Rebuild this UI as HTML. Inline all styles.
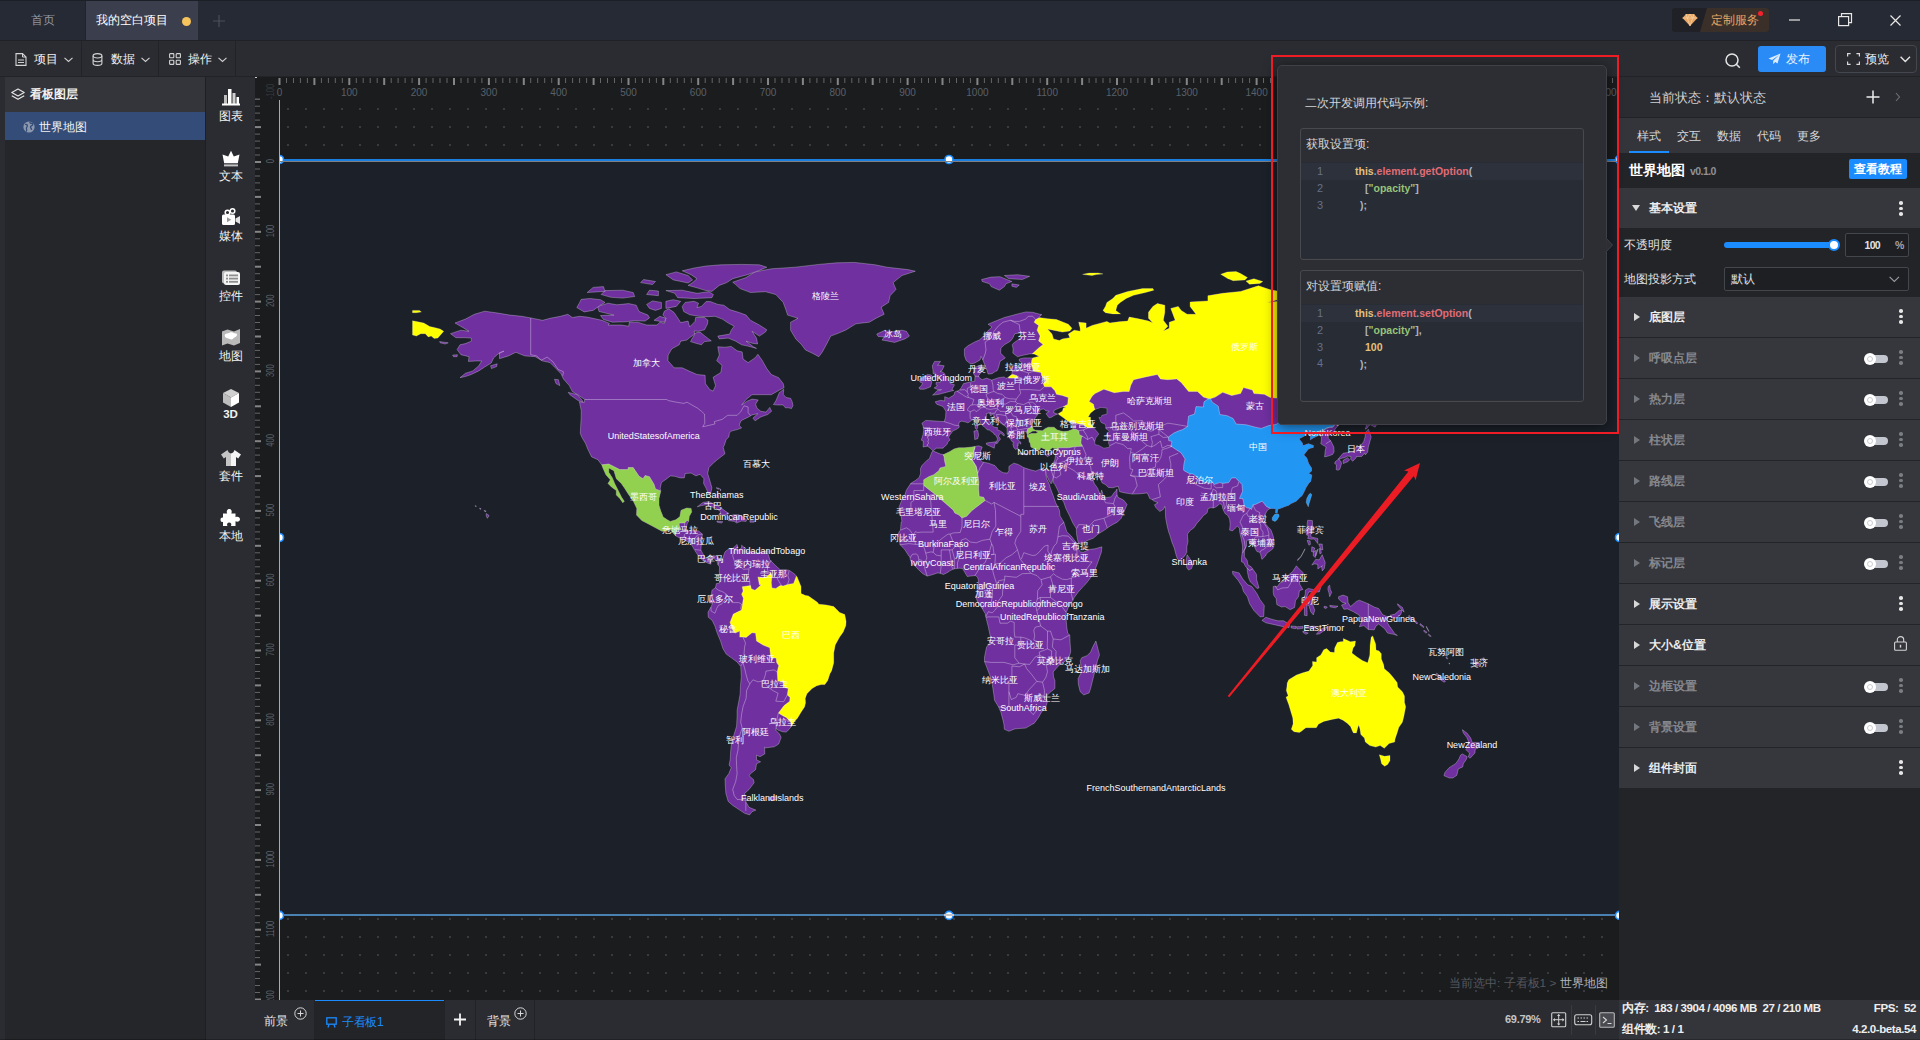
<!DOCTYPE html>
<html lang="zh">
<head>
<meta charset="utf-8">
<title>editor</title>
<style>
*{box-sizing:border-box;margin:0;padding:0}
html,body{width:1920px;height:1040px;overflow:hidden;background:#232428;font-family:"Liberation Sans",sans-serif;font-size:12px;color:#e6e6e6}
.a{position:absolute}
.t{position:absolute;white-space:nowrap;line-height:1}
svg{position:absolute;overflow:visible}
.b{font-weight:bold}
/* top bar */
#top{left:0;top:0;width:1920px;height:40px;background:#262a34}
#top2{left:0;top:41px;width:1920px;height:36px;background:#2b2c31}
.vd{position:absolute;top:41px;width:1px;height:36px;background:#222327}
/* left */
#lp{left:5px;top:77px;width:201px;height:963px;background:#252629}
#lph{left:5px;top:77px;width:201px;height:35px;background:#34353b}
#lps{left:5px;top:112px;width:201px;height:28px;background:#344d78}
#tb{left:206px;top:77px;width:49px;height:963px;background:#2b2c31}
.tbl{position:absolute;left:206px;width:49px;text-align:center;font-size:12px;color:#f2f2f2;line-height:1}
/* canvas */
#cv{left:255px;top:77px;width:1365px;height:923px;background:#1b1c1e}
#comp{left:280px;top:160px;width:1340px;height:755px;background:#1b2029}
/* right */
#rp{left:1619px;top:77px;width:301px;height:923px;background:#232427}
.sec{position:absolute;left:1619px;width:301px;height:40px;background:#36373d}
.sect{position:absolute;left:1649px;font-size:12px;font-weight:bold;line-height:1;white-space:nowrap}
.tri{position:absolute;left:1634px;width:0;height:0;border-left:6px solid #d8d8d8;border-top:4.5px solid transparent;border-bottom:4.5px solid transparent}
.dis .tri{border-left-color:#74777d}
.dis .sect{color:#85888e}
.dots3{position:absolute;left:1899px;width:4px}
.dots3 i{position:absolute;left:0;width:3.6px;height:3.6px;border-radius:50%;background:#e6e6e6}
.dis .dots3 i{background:#7a7d83}
.tg{position:absolute;left:1864px;width:24px;height:12px}
.tg .tr{position:absolute;left:5px;top:2px;width:19px;height:8px;border-radius:4px;background:#c3c6ce}
.tg .kn{position:absolute;left:0;top:0;width:12px;height:12px;border-radius:50%;background:#fff}
.tg .kn:after{content:"";position:absolute;left:3px;top:3px;width:4px;height:4px;border-radius:50%;border:1px solid #c9ccd3}
/* bottom */
#bb{left:255px;top:1000px;width:1364px;height:40px;background:#2b2c31}
#sb{left:1619px;top:1000px;width:301px;height:40px;background:#34353b}
/* popup */
#pop{left:1277px;top:65px;width:330px;height:360px;background:#2d2e33;border:1px solid #404148;border-radius:5px;box-shadow:0 2px 14px rgba(0,0,0,.55)}
.cb{position:absolute;left:1300px;width:284px;height:132px;border:1px solid #47494f;border-radius:3px;background:#2d2e33}
.code{position:absolute;left:1301px;width:282px;height:96px;background:#282c34}
.hl{position:absolute;left:1301px;width:282px;height:17px;background:#2c313c}
.ln{position:absolute;font-size:11px;color:#66708a;line-height:1}
.cd{position:absolute;font-size:10.5px;line-height:1;white-space:nowrap;color:#abb2bf;font-weight:bold}
.cy{color:#e5c07b}.cr{color:#e06c75}.cc{color:#56b6c2}.cg{color:#98c379}.co{color:#e5c07b}
</style>
</head>
<body>
<!-- ============ TOP BAR ============ -->
<div class="a" id="top"></div>
<div class="a" style="left:0;top:0;width:1920px;height:1px;background:#1d1f26"></div>
<div class="a" style="left:0;top:40px;width:1920px;height:1px;background:#1f2127"></div>
<div class="a" style="left:85px;top:1px;width:1px;height:39px;background:#20232b"></div>
<div class="a" style="left:86px;top:1px;width:112px;height:39px;background:#3a3e4d"></div>
<div class="t" style="left:31px;top:14px;font-size:12px;color:#9096a3">首页</div>
<div class="t" style="left:96px;top:14px;font-size:12px;color:#ffffff">我的空白项目</div>
<div class="a" style="left:182px;top:16.5px;width:9px;height:9px;border-radius:50%;background:#f7c35c"></div>
<svg style="left:213px;top:15px" width="12" height="12"><path d="M6 0v12M0 6h12" stroke="#4b4f5a" stroke-width="1.2" fill="none"/></svg>
<!-- custom service -->
<div class="a" style="left:1672px;top:8px;width:97px;height:24px;border-radius:3px;background:#1f2127"></div>
<svg style="left:1700px;top:8px" width="69" height="24"><path d="M7 0H66a3 3 0 0 1 3 3V21a3 3 0 0 1-3 3H0Z" fill="#3b3029"/></svg>
<svg style="left:1682px;top:13px" width="16" height="14"><path d="M4 1h8l3.5 4L8 13 .5 5Z" fill="#e9a868"/><path d="M.5 5h15M4 1l4 12 4-12M5.5 5 8 1l2.500 4" stroke="#f6d2a4" stroke-width=".7" fill="none"/></svg>
<div class="t" style="left:1711px;top:14px;font-size:12px;color:#e7a767">定制服务</div>
<div class="a" style="left:1758px;top:11px;width:5px;height:5px;border-radius:50%;background:#f5222d"></div>
<svg style="left:1789px;top:19px" width="12" height="2"><path d="M0 1h11" stroke="#e8e8e8" stroke-width="1.2"/></svg>
<svg style="left:1838px;top:13px" width="15" height="14"><rect x=".6" y="3.6" width="10" height="9" fill="none" stroke="#e8e8e8" stroke-width="1.2"/><path d="M3.500 3.500V.6h10v9h-3" fill="none" stroke="#e8e8e8" stroke-width="1.2"/></svg>
<svg style="left:1890px;top:15px" width="11" height="11"><path d="M.5.5l10 10M10.500.5l-10 10" stroke="#e8e8e8" stroke-width="1.2"/></svg>

<!-- ============ SECOND BAR ============ -->
<div class="a" id="top2"></div>
<div class="a" style="left:0;top:76px;width:1920px;height:1px;background:#222327"></div>
<div class="vd" style="left:81px"></div><div class="vd" style="left:158px"></div><div class="vd" style="left:235px"></div>
<svg style="left:15px;top:53px" width="12" height="13"><path d="M1 .6h6.500L11 4v8.400H1Z" fill="none" stroke="#d4d4d4" stroke-width="1.1"/><path d="M7.500.6V4H11M3 7h6M3 9.500h6" fill="none" stroke="#d4d4d4" stroke-width="1"/></svg>
<div class="t" style="left:34px;top:53px;font-size:12px;color:#f0f0f0">项目</div>
<svg style="left:64px;top:57px" width="9" height="6"><path d="M.5.8l4 3.700 4-3.700" fill="none" stroke="#d0d0d0" stroke-width="1.1"/></svg>
<svg style="left:92px;top:53px" width="11" height="13"><ellipse cx="5.500" cy="2.800" rx="4.400" ry="2.200" fill="none" stroke="#d4d4d4" stroke-width="1.1"/><path d="M1.100 2.800v7.400c0 1.200 2 2.200 4.400 2.200s4.400-1 4.400-2.200V2.800M1.100 6.500c0 1.200 2 2.200 4.400 2.200s4.400-1 4.400-2.200" fill="none" stroke="#d4d4d4" stroke-width="1.1"/></svg>
<div class="t" style="left:111px;top:53px;font-size:12px;color:#f0f0f0">数据</div>
<svg style="left:141px;top:57px" width="9" height="6"><path d="M.5.8l4 3.700 4-3.700" fill="none" stroke="#d0d0d0" stroke-width="1.1"/></svg>
<svg style="left:169px;top:53px" width="12" height="12"><g fill="none" stroke="#d4d4d4" stroke-width="1.1"><rect x=".6" y=".6" width="4.200" height="4.200" rx=".7"/><rect x="7.200" y=".6" width="4.200" height="4.200" rx=".7"/><rect x=".6" y="7.200" width="4.200" height="4.200" rx=".7"/><rect x="7.200" y="7.200" width="4.200" height="4.200" rx=".7"/></g></svg>
<div class="t" style="left:188px;top:53px;font-size:12px;color:#f0f0f0">操作</div>
<svg style="left:218px;top:57px" width="9" height="6"><path d="M.5.8l4 3.700 4-3.700" fill="none" stroke="#d0d0d0" stroke-width="1.1"/></svg>
<!-- search / publish / preview -->
<svg style="left:1724px;top:52px" width="18" height="18"><circle cx="8" cy="8" r="6" fill="none" stroke="#e4e4e4" stroke-width="1.500"/><path d="M12.300 12.300l3.500 3.500" stroke="#e4e4e4" stroke-width="1.600"/></svg>
<div class="a" style="left:1758px;top:46px;width:68px;height:26px;border-radius:3px;background:#2a8bf7"></div>
<svg style="left:1768px;top:53px" width="13" height="12"><path d="M12.500.5.5 5.500l3.500 1.600L11 2 5.200 7.800v3.500l2-2.300 2.300 1.500Z" fill="#dcebff"/></svg>
<div class="t" style="left:1786px;top:53px;font-size:12px;color:#e8f2ff">发布</div>
<div class="a" style="left:1835px;top:45px;width:82px;height:28px;border-radius:4px;border:1px solid #45474e"></div>
<svg style="left:1847px;top:53px" width="13" height="12"><path d="M.6 3.500V.6h3M9.400.6h3v2.900M12.400 8.500v2.900h-3M3.600 11.400h-3V8.500" fill="none" stroke="#d8d8d8" stroke-width="1.200"/></svg>
<div class="t" style="left:1865px;top:53px;font-size:12px;color:#f0f0f0">预览</div>
<svg style="left:1900px;top:56px" width="11" height="7"><path d="M.6.8l4.700 4.600L10 .8" fill="none" stroke="#e4e4e4" stroke-width="1.400"/></svg>

<!-- ============ LEFT PANEL ============ -->
<div class="a" style="left:0;top:77px;width:5px;height:963px;background:#2b2c31"></div>
<div class="a" id="lp"></div>
<div class="a" id="lph"></div>
<div class="a" id="lps"></div>
<svg style="left:11px;top:88px" width="14" height="14"><path d="M7 1 .8 4.500 7 8l6.200-3.500Z" fill="none" stroke="#e4e4e4" stroke-width="1.200" stroke-linejoin="round"/><path d="M.8 7.800 7 11.300l6.200-3.500" fill="none" stroke="#e4e4e4" stroke-width="1.200" stroke-linejoin="round"/></svg>
<div class="t b" style="left:30px;top:88px;font-size:12px;color:#f2f2f2">看板图层</div>
<svg style="left:23px;top:121px" width="12" height="12"><circle cx="6" cy="6" r="5.600" fill="#8c98ae"/><path d="M2 3.500c1.500-.5 2.500.3 2.300 1.500S3 6.500 3.500 8s-.5 2 .3 2.600M7 .8c-.5 1 .5 1.700 1.500 1.500s1.800.7 1 1.700-2 .8-2 2 1.300 1.500 1 2.800" fill="none" stroke="#344d78" stroke-width="1.300"/></svg>
<div class="t" style="left:39px;top:121px;font-size:12px;color:#f2f2f2">世界地图</div>

<!-- ============ COMPONENT TOOLBAR ============ -->
<div class="a" id="tb"></div>
<div class="a" style="left:205px;top:77px;width:1px;height:963px;background:#1e1f22"></div>
<!-- chart -->
<svg style="left:221px;top:88px" width="20" height="18"><rect x="3" y="7" width="3" height="9" fill="#bdbdbd"/><rect x="7" y="1" width="3.500" height="15" fill="#ffffff"/><rect x="11.500" y="5" width="3" height="11" fill="#cfcfcf"/><rect x="15.500" y="9" width="2.500" height="7" fill="#ffffff"/><rect x="1" y="15.500" width="18" height="2" fill="#ffffff"/></svg>
<div class="tbl" style="top:110px">图表</div>
<!-- text (crown) -->
<svg style="left:221px;top:150px" width="20" height="17"><path d="M10 .8 12.800 6.500 18.500 4.500 16.800 13.200H3.200L1.500 4.500 7.200 6.500Z" fill="#ffffff"/><rect x="3" y="14.400" width="14" height="2" fill="#c4c4c4"/></svg>
<div class="tbl" style="top:170px">文本</div>
<!-- media (camera) -->
<svg style="left:221px;top:208px" width="20" height="18"><circle cx="6.500" cy="4.500" r="2.300" fill="none" stroke="#fff" stroke-width="1.500"/><circle cx="11.500" cy="3" r="2.300" fill="none" stroke="#fff" stroke-width="1.500"/><rect x="1" y="6.500" width="13" height="10.500" rx="1.500" fill="#ffffff"/><path d="M14.500 10.500 19 8v8l-4.500-2.500Z" fill="#e2e2e2"/><path d="M6 9.300v5l4.300-2.500Z" fill="#9a9a9a"/></svg>
<div class="tbl" style="top:230px">媒体</div>
<!-- control (list) -->
<svg style="left:221px;top:269px" width="20" height="17"><rect x="1" y="1.500" width="15" height="13" rx="2" fill="#bdbdbd"/><rect x="3" y="3" width="16" height="13" rx="2" fill="#f4f4f4"/><g fill="#8e8e8e"><rect x="5" y="5.500" width="2" height="1.800"/><rect x="8" y="5.500" width="9" height="1.800"/><rect x="5" y="8.700" width="2" height="1.800"/><rect x="8" y="8.700" width="9" height="1.800"/><rect x="5" y="11.900" width="2" height="1.800"/><rect x="8" y="11.900" width="9" height="1.800"/></g></svg>
<div class="tbl" style="top:290px">控件</div>
<!-- map -->
<svg style="left:221px;top:328px" width="20" height="18"><path d="M1 3.500 6.500 1.500 13 3.500 19 1v14l-6 2.500-6.500-2L1 17.500Z" fill="#b9b9b9"/><path d="M4 6.500c1-1.500 3-1 4.500-1.800s3-.5 4.500.3 3 .2 3 1.500-1 2.500-2.500 3-1.500 2-3 2-2.500-1-4-1.200S3 8 4 6.500Z" fill="#ffffff"/></svg>
<div class="tbl" style="top:350px">地图</div>
<!-- 3D cube -->
<svg style="left:221px;top:388px" width="20" height="20"><path d="M10 1 18 5 10 9.500 2 5Z" fill="#cfcfcf"/><path d="M2 5v9.500l8 4.500V9.500Z" fill="#bdbdbd"/><path d="M18 5v9.500L10 19V9.500Z" fill="#ffffff"/></svg>
<div class="tbl b" style="top:409px;font-size:11.5px">3D</div>
<!-- suite (shirt) -->
<svg style="left:220px;top:449px" width="22" height="18"><path d="M7.500 1 1 5.500l2.800 4L6 8v9h5V4.500C9.500 4.200 8 3 7.500 1Z" fill="#c4c4c4"/><path d="M14.500 1 21 5.500l-2.800 4L16 8v9h-5V4.500C12.500 4.200 14 3 14.500 1Z" fill="#f4f4f4"/></svg>
<div class="tbl" style="top:470px">套件</div>
<!-- local (puzzle) -->
<svg style="left:220px;top:508px" width="22" height="19"><path d="M3 5.500h4.200C6.200 3.500 7 1 9.300 1s3 2.500 2 4.500H15.500v3.800c2-1 4.500-.2 4.500 2s-2.500 3-4.500 2V18H11c1-2-.2-3.500-1.800-3.500S6.400 16 7.400 18H3v-4.200c-2 1-2.500-1-2.500-2.300S2 9 3 9.800Z" fill="#ffffff"/></svg>
<div class="tbl" style="top:530px">本地</div>


<!-- ============ CANVAS ============ -->
<div class="a" id="cv"></div>
<svg style="left:280px;top:100px" width="1340" height="900"><defs><pattern id="dg" x="7" y="8" width="18" height="18" patternUnits="userSpaceOnUse"><rect x="0" y="0" width="2" height="2" fill="#3a3b40"/></pattern></defs><rect x="0" y="0" width="1340" height="900" fill="url(#dg)"/></svg>
<svg style="left:0;top:0" width="1920" height="1040" font-family="Liberation Sans, sans-serif">
<rect x="278.5" y="78" width="2" height="7" fill="#858585"/>
<rect x="286.0" y="78" width="1" height="5" fill="#646668"/>
<rect x="293.0" y="78" width="1" height="5" fill="#646668"/>
<rect x="299.9" y="78" width="1" height="5" fill="#646668"/>
<rect x="306.9" y="78" width="1" height="5" fill="#646668"/>
<rect x="313.4" y="78" width="2" height="7" fill="#858585"/>
<rect x="320.9" y="78" width="1" height="5" fill="#646668"/>
<rect x="327.9" y="78" width="1" height="5" fill="#646668"/>
<rect x="334.8" y="78" width="1" height="5" fill="#646668"/>
<rect x="341.8" y="78" width="1" height="5" fill="#646668"/>
<rect x="348.3" y="78" width="2" height="7" fill="#858585"/>
<rect x="355.8" y="78" width="1" height="5" fill="#646668"/>
<rect x="362.7" y="78" width="1" height="5" fill="#646668"/>
<rect x="369.7" y="78" width="1" height="5" fill="#646668"/>
<rect x="376.7" y="78" width="1" height="5" fill="#646668"/>
<rect x="383.2" y="78" width="2" height="7" fill="#858585"/>
<rect x="390.7" y="78" width="1" height="5" fill="#646668"/>
<rect x="397.6" y="78" width="1" height="5" fill="#646668"/>
<rect x="404.6" y="78" width="1" height="5" fill="#646668"/>
<rect x="411.6" y="78" width="1" height="5" fill="#646668"/>
<rect x="418.1" y="78" width="2" height="7" fill="#858585"/>
<rect x="425.6" y="78" width="1" height="5" fill="#646668"/>
<rect x="432.5" y="78" width="1" height="5" fill="#646668"/>
<rect x="439.5" y="78" width="1" height="5" fill="#646668"/>
<rect x="446.5" y="78" width="1" height="5" fill="#646668"/>
<rect x="453.0" y="78" width="2" height="7" fill="#858585"/>
<rect x="460.5" y="78" width="1" height="5" fill="#646668"/>
<rect x="467.4" y="78" width="1" height="5" fill="#646668"/>
<rect x="474.4" y="78" width="1" height="5" fill="#646668"/>
<rect x="481.4" y="78" width="1" height="5" fill="#646668"/>
<rect x="487.9" y="78" width="2" height="7" fill="#858585"/>
<rect x="495.3" y="78" width="1" height="5" fill="#646668"/>
<rect x="502.3" y="78" width="1" height="5" fill="#646668"/>
<rect x="509.3" y="78" width="1" height="5" fill="#646668"/>
<rect x="516.3" y="78" width="1" height="5" fill="#646668"/>
<rect x="522.8" y="78" width="2" height="7" fill="#858585"/>
<rect x="530.2" y="78" width="1" height="5" fill="#646668"/>
<rect x="537.2" y="78" width="1" height="5" fill="#646668"/>
<rect x="544.2" y="78" width="1" height="5" fill="#646668"/>
<rect x="551.2" y="78" width="1" height="5" fill="#646668"/>
<rect x="557.7" y="78" width="2" height="7" fill="#858585"/>
<rect x="565.1" y="78" width="1" height="5" fill="#646668"/>
<rect x="572.1" y="78" width="1" height="5" fill="#646668"/>
<rect x="579.1" y="78" width="1" height="5" fill="#646668"/>
<rect x="586.1" y="78" width="1" height="5" fill="#646668"/>
<rect x="592.6" y="78" width="2" height="7" fill="#858585"/>
<rect x="600.0" y="78" width="1" height="5" fill="#646668"/>
<rect x="607.0" y="78" width="1" height="5" fill="#646668"/>
<rect x="614.0" y="78" width="1" height="5" fill="#646668"/>
<rect x="621.0" y="78" width="1" height="5" fill="#646668"/>
<rect x="627.5" y="78" width="2" height="7" fill="#858585"/>
<rect x="634.9" y="78" width="1" height="5" fill="#646668"/>
<rect x="641.9" y="78" width="1" height="5" fill="#646668"/>
<rect x="648.9" y="78" width="1" height="5" fill="#646668"/>
<rect x="655.9" y="78" width="1" height="5" fill="#646668"/>
<rect x="662.3" y="78" width="2" height="7" fill="#858585"/>
<rect x="669.8" y="78" width="1" height="5" fill="#646668"/>
<rect x="676.8" y="78" width="1" height="5" fill="#646668"/>
<rect x="683.8" y="78" width="1" height="5" fill="#646668"/>
<rect x="690.8" y="78" width="1" height="5" fill="#646668"/>
<rect x="697.2" y="78" width="2" height="7" fill="#858585"/>
<rect x="704.7" y="78" width="1" height="5" fill="#646668"/>
<rect x="711.7" y="78" width="1" height="5" fill="#646668"/>
<rect x="718.7" y="78" width="1" height="5" fill="#646668"/>
<rect x="725.7" y="78" width="1" height="5" fill="#646668"/>
<rect x="732.1" y="78" width="2" height="7" fill="#858585"/>
<rect x="739.6" y="78" width="1" height="5" fill="#646668"/>
<rect x="746.6" y="78" width="1" height="5" fill="#646668"/>
<rect x="753.6" y="78" width="1" height="5" fill="#646668"/>
<rect x="760.6" y="78" width="1" height="5" fill="#646668"/>
<rect x="767.0" y="78" width="2" height="7" fill="#858585"/>
<rect x="774.5" y="78" width="1" height="5" fill="#646668"/>
<rect x="781.5" y="78" width="1" height="5" fill="#646668"/>
<rect x="788.5" y="78" width="1" height="5" fill="#646668"/>
<rect x="795.4" y="78" width="1" height="5" fill="#646668"/>
<rect x="801.9" y="78" width="2" height="7" fill="#858585"/>
<rect x="809.4" y="78" width="1" height="5" fill="#646668"/>
<rect x="816.4" y="78" width="1" height="5" fill="#646668"/>
<rect x="823.4" y="78" width="1" height="5" fill="#646668"/>
<rect x="830.3" y="78" width="1" height="5" fill="#646668"/>
<rect x="836.8" y="78" width="2" height="7" fill="#858585"/>
<rect x="844.3" y="78" width="1" height="5" fill="#646668"/>
<rect x="851.3" y="78" width="1" height="5" fill="#646668"/>
<rect x="858.3" y="78" width="1" height="5" fill="#646668"/>
<rect x="865.2" y="78" width="1" height="5" fill="#646668"/>
<rect x="871.7" y="78" width="2" height="7" fill="#858585"/>
<rect x="879.2" y="78" width="1" height="5" fill="#646668"/>
<rect x="886.2" y="78" width="1" height="5" fill="#646668"/>
<rect x="893.2" y="78" width="1" height="5" fill="#646668"/>
<rect x="900.1" y="78" width="1" height="5" fill="#646668"/>
<rect x="906.6" y="78" width="2" height="7" fill="#858585"/>
<rect x="914.1" y="78" width="1" height="5" fill="#646668"/>
<rect x="921.1" y="78" width="1" height="5" fill="#646668"/>
<rect x="928.0" y="78" width="1" height="5" fill="#646668"/>
<rect x="935.0" y="78" width="1" height="5" fill="#646668"/>
<rect x="941.5" y="78" width="2" height="7" fill="#858585"/>
<rect x="949.0" y="78" width="1" height="5" fill="#646668"/>
<rect x="956.0" y="78" width="1" height="5" fill="#646668"/>
<rect x="962.9" y="78" width="1" height="5" fill="#646668"/>
<rect x="969.9" y="78" width="1" height="5" fill="#646668"/>
<rect x="976.4" y="78" width="2" height="7" fill="#858585"/>
<rect x="983.9" y="78" width="1" height="5" fill="#646668"/>
<rect x="990.9" y="78" width="1" height="5" fill="#646668"/>
<rect x="997.8" y="78" width="1" height="5" fill="#646668"/>
<rect x="1004.8" y="78" width="1" height="5" fill="#646668"/>
<rect x="1011.3" y="78" width="2" height="7" fill="#858585"/>
<rect x="1018.8" y="78" width="1" height="5" fill="#646668"/>
<rect x="1025.8" y="78" width="1" height="5" fill="#646668"/>
<rect x="1032.7" y="78" width="1" height="5" fill="#646668"/>
<rect x="1039.7" y="78" width="1" height="5" fill="#646668"/>
<rect x="1046.2" y="78" width="2" height="7" fill="#858585"/>
<rect x="1053.7" y="78" width="1" height="5" fill="#646668"/>
<rect x="1060.6" y="78" width="1" height="5" fill="#646668"/>
<rect x="1067.6" y="78" width="1" height="5" fill="#646668"/>
<rect x="1074.6" y="78" width="1" height="5" fill="#646668"/>
<rect x="1081.1" y="78" width="2" height="7" fill="#858585"/>
<rect x="1088.6" y="78" width="1" height="5" fill="#646668"/>
<rect x="1095.5" y="78" width="1" height="5" fill="#646668"/>
<rect x="1102.5" y="78" width="1" height="5" fill="#646668"/>
<rect x="1109.5" y="78" width="1" height="5" fill="#646668"/>
<rect x="1116.0" y="78" width="2" height="7" fill="#858585"/>
<rect x="1123.5" y="78" width="1" height="5" fill="#646668"/>
<rect x="1130.4" y="78" width="1" height="5" fill="#646668"/>
<rect x="1137.4" y="78" width="1" height="5" fill="#646668"/>
<rect x="1144.4" y="78" width="1" height="5" fill="#646668"/>
<rect x="1150.9" y="78" width="2" height="7" fill="#858585"/>
<rect x="1158.4" y="78" width="1" height="5" fill="#646668"/>
<rect x="1165.3" y="78" width="1" height="5" fill="#646668"/>
<rect x="1172.3" y="78" width="1" height="5" fill="#646668"/>
<rect x="1179.3" y="78" width="1" height="5" fill="#646668"/>
<rect x="1185.8" y="78" width="2" height="7" fill="#858585"/>
<rect x="1193.2" y="78" width="1" height="5" fill="#646668"/>
<rect x="1200.2" y="78" width="1" height="5" fill="#646668"/>
<rect x="1207.2" y="78" width="1" height="5" fill="#646668"/>
<rect x="1214.2" y="78" width="1" height="5" fill="#646668"/>
<rect x="1220.7" y="78" width="2" height="7" fill="#858585"/>
<rect x="1228.1" y="78" width="1" height="5" fill="#646668"/>
<rect x="1235.1" y="78" width="1" height="5" fill="#646668"/>
<rect x="1242.1" y="78" width="1" height="5" fill="#646668"/>
<rect x="1249.1" y="78" width="1" height="5" fill="#646668"/>
<rect x="1255.6" y="78" width="2" height="7" fill="#858585"/>
<rect x="1263.0" y="78" width="1" height="5" fill="#646668"/>
<rect x="1270.0" y="78" width="1" height="5" fill="#646668"/>
<rect x="1277.0" y="78" width="1" height="5" fill="#646668"/>
<rect x="1284.0" y="78" width="1" height="5" fill="#646668"/>
<rect x="1290.5" y="78" width="2" height="7" fill="#858585"/>
<rect x="1297.9" y="78" width="1" height="5" fill="#646668"/>
<rect x="1304.9" y="78" width="1" height="5" fill="#646668"/>
<rect x="1311.9" y="78" width="1" height="5" fill="#646668"/>
<rect x="1318.9" y="78" width="1" height="5" fill="#646668"/>
<rect x="1325.3" y="78" width="2" height="7" fill="#858585"/>
<rect x="1332.8" y="78" width="1" height="5" fill="#646668"/>
<rect x="1339.8" y="78" width="1" height="5" fill="#646668"/>
<rect x="1346.8" y="78" width="1" height="5" fill="#646668"/>
<rect x="1353.8" y="78" width="1" height="5" fill="#646668"/>
<rect x="1360.2" y="78" width="2" height="7" fill="#858585"/>
<rect x="1367.7" y="78" width="1" height="5" fill="#646668"/>
<rect x="1374.7" y="78" width="1" height="5" fill="#646668"/>
<rect x="1381.7" y="78" width="1" height="5" fill="#646668"/>
<rect x="1388.7" y="78" width="1" height="5" fill="#646668"/>
<rect x="1395.1" y="78" width="2" height="7" fill="#858585"/>
<rect x="1402.6" y="78" width="1" height="5" fill="#646668"/>
<rect x="1409.6" y="78" width="1" height="5" fill="#646668"/>
<rect x="1416.6" y="78" width="1" height="5" fill="#646668"/>
<rect x="1423.6" y="78" width="1" height="5" fill="#646668"/>
<rect x="1430.0" y="78" width="2" height="7" fill="#858585"/>
<rect x="1437.5" y="78" width="1" height="5" fill="#646668"/>
<rect x="1444.5" y="78" width="1" height="5" fill="#646668"/>
<rect x="1451.5" y="78" width="1" height="5" fill="#646668"/>
<rect x="1458.5" y="78" width="1" height="5" fill="#646668"/>
<rect x="1464.9" y="78" width="2" height="7" fill="#858585"/>
<rect x="1472.4" y="78" width="1" height="5" fill="#646668"/>
<rect x="1479.4" y="78" width="1" height="5" fill="#646668"/>
<rect x="1486.4" y="78" width="1" height="5" fill="#646668"/>
<rect x="1493.3" y="78" width="1" height="5" fill="#646668"/>
<rect x="1499.8" y="78" width="2" height="7" fill="#858585"/>
<rect x="1507.3" y="78" width="1" height="5" fill="#646668"/>
<rect x="1514.3" y="78" width="1" height="5" fill="#646668"/>
<rect x="1521.3" y="78" width="1" height="5" fill="#646668"/>
<rect x="1528.2" y="78" width="1" height="5" fill="#646668"/>
<rect x="1534.7" y="78" width="2" height="7" fill="#858585"/>
<rect x="1542.2" y="78" width="1" height="5" fill="#646668"/>
<rect x="1549.2" y="78" width="1" height="5" fill="#646668"/>
<rect x="1556.2" y="78" width="1" height="5" fill="#646668"/>
<rect x="1563.1" y="78" width="1" height="5" fill="#646668"/>
<rect x="1569.6" y="78" width="2" height="7" fill="#858585"/>
<rect x="1577.1" y="78" width="1" height="5" fill="#646668"/>
<rect x="1584.1" y="78" width="1" height="5" fill="#646668"/>
<rect x="1591.1" y="78" width="1" height="5" fill="#646668"/>
<rect x="1598.0" y="78" width="1" height="5" fill="#646668"/>
<rect x="1604.5" y="78" width="2" height="7" fill="#858585"/>
<rect x="1612.0" y="78" width="1" height="5" fill="#646668"/>
<rect x="1619.0" y="78" width="1" height="5" fill="#646668"/>
<text x="279.5" y="95.8" font-size="10" fill="#596068" text-anchor="middle">0</text>
<text x="349.3" y="95.8" font-size="10" fill="#596068" text-anchor="middle">100</text>
<text x="419.1" y="95.8" font-size="10" fill="#596068" text-anchor="middle">200</text>
<text x="488.9" y="95.8" font-size="10" fill="#596068" text-anchor="middle">300</text>
<text x="558.7" y="95.8" font-size="10" fill="#596068" text-anchor="middle">400</text>
<text x="628.5" y="95.8" font-size="10" fill="#596068" text-anchor="middle">500</text>
<text x="698.2" y="95.8" font-size="10" fill="#596068" text-anchor="middle">600</text>
<text x="768.0" y="95.8" font-size="10" fill="#596068" text-anchor="middle">700</text>
<text x="837.8" y="95.8" font-size="10" fill="#596068" text-anchor="middle">800</text>
<text x="907.6" y="95.8" font-size="10" fill="#596068" text-anchor="middle">900</text>
<text x="977.4" y="95.8" font-size="10" fill="#596068" text-anchor="middle">1000</text>
<text x="1047.2" y="95.8" font-size="10" fill="#596068" text-anchor="middle">1100</text>
<text x="1117.0" y="95.8" font-size="10" fill="#596068" text-anchor="middle">1200</text>
<text x="1186.8" y="95.8" font-size="10" fill="#596068" text-anchor="middle">1300</text>
<text x="1256.6" y="95.8" font-size="10" fill="#596068" text-anchor="middle">1400</text>
<text x="1326.3" y="95.8" font-size="10" fill="#596068" text-anchor="middle">1500</text>
<text x="1396.1" y="95.8" font-size="10" fill="#596068" text-anchor="middle">1600</text>
<text x="1465.9" y="95.8" font-size="10" fill="#596068" text-anchor="middle">1700</text>
<text x="1535.7" y="95.8" font-size="10" fill="#596068" text-anchor="middle">1800</text>
<text x="1605.5" y="95.8" font-size="10" fill="#596068" text-anchor="middle">1900</text>
<rect x="255" y="98.7" width="5" height="1" fill="#646668"/>
<rect x="255" y="105.7" width="5" height="1" fill="#646668"/>
<rect x="255" y="112.6" width="5" height="1" fill="#646668"/>
<rect x="255" y="119.6" width="5" height="1" fill="#646668"/>
<rect x="255" y="126.1" width="6" height="2" fill="#858585"/>
<rect x="255" y="133.6" width="5" height="1" fill="#646668"/>
<rect x="255" y="140.6" width="5" height="1" fill="#646668"/>
<rect x="255" y="147.5" width="5" height="1" fill="#646668"/>
<rect x="255" y="154.5" width="5" height="1" fill="#646668"/>
<rect x="255" y="161.0" width="6" height="2" fill="#858585"/>
<rect x="255" y="168.5" width="5" height="1" fill="#646668"/>
<rect x="255" y="175.5" width="5" height="1" fill="#646668"/>
<rect x="255" y="182.4" width="5" height="1" fill="#646668"/>
<rect x="255" y="189.4" width="5" height="1" fill="#646668"/>
<rect x="255" y="195.9" width="6" height="2" fill="#858585"/>
<rect x="255" y="203.4" width="5" height="1" fill="#646668"/>
<rect x="255" y="210.4" width="5" height="1" fill="#646668"/>
<rect x="255" y="217.3" width="5" height="1" fill="#646668"/>
<rect x="255" y="224.3" width="5" height="1" fill="#646668"/>
<rect x="255" y="230.8" width="6" height="2" fill="#858585"/>
<rect x="255" y="238.3" width="5" height="1" fill="#646668"/>
<rect x="255" y="245.2" width="5" height="1" fill="#646668"/>
<rect x="255" y="252.2" width="5" height="1" fill="#646668"/>
<rect x="255" y="259.2" width="5" height="1" fill="#646668"/>
<rect x="255" y="265.7" width="6" height="2" fill="#858585"/>
<rect x="255" y="273.2" width="5" height="1" fill="#646668"/>
<rect x="255" y="280.1" width="5" height="1" fill="#646668"/>
<rect x="255" y="287.1" width="5" height="1" fill="#646668"/>
<rect x="255" y="294.1" width="5" height="1" fill="#646668"/>
<rect x="255" y="300.6" width="6" height="2" fill="#858585"/>
<rect x="255" y="308.1" width="5" height="1" fill="#646668"/>
<rect x="255" y="315.0" width="5" height="1" fill="#646668"/>
<rect x="255" y="322.0" width="5" height="1" fill="#646668"/>
<rect x="255" y="329.0" width="5" height="1" fill="#646668"/>
<rect x="255" y="335.5" width="6" height="2" fill="#858585"/>
<rect x="255" y="343.0" width="5" height="1" fill="#646668"/>
<rect x="255" y="349.9" width="5" height="1" fill="#646668"/>
<rect x="255" y="356.9" width="5" height="1" fill="#646668"/>
<rect x="255" y="363.9" width="5" height="1" fill="#646668"/>
<rect x="255" y="370.4" width="6" height="2" fill="#858585"/>
<rect x="255" y="377.8" width="5" height="1" fill="#646668"/>
<rect x="255" y="384.8" width="5" height="1" fill="#646668"/>
<rect x="255" y="391.8" width="5" height="1" fill="#646668"/>
<rect x="255" y="398.8" width="5" height="1" fill="#646668"/>
<rect x="255" y="405.3" width="6" height="2" fill="#858585"/>
<rect x="255" y="412.7" width="5" height="1" fill="#646668"/>
<rect x="255" y="419.7" width="5" height="1" fill="#646668"/>
<rect x="255" y="426.7" width="5" height="1" fill="#646668"/>
<rect x="255" y="433.7" width="5" height="1" fill="#646668"/>
<rect x="255" y="440.2" width="6" height="2" fill="#858585"/>
<rect x="255" y="447.6" width="5" height="1" fill="#646668"/>
<rect x="255" y="454.6" width="5" height="1" fill="#646668"/>
<rect x="255" y="461.6" width="5" height="1" fill="#646668"/>
<rect x="255" y="468.6" width="5" height="1" fill="#646668"/>
<rect x="255" y="475.1" width="6" height="2" fill="#858585"/>
<rect x="255" y="482.5" width="5" height="1" fill="#646668"/>
<rect x="255" y="489.5" width="5" height="1" fill="#646668"/>
<rect x="255" y="496.5" width="5" height="1" fill="#646668"/>
<rect x="255" y="503.5" width="5" height="1" fill="#646668"/>
<rect x="255" y="509.9" width="6" height="2" fill="#858585"/>
<rect x="255" y="517.4" width="5" height="1" fill="#646668"/>
<rect x="255" y="524.4" width="5" height="1" fill="#646668"/>
<rect x="255" y="531.4" width="5" height="1" fill="#646668"/>
<rect x="255" y="538.4" width="5" height="1" fill="#646668"/>
<rect x="255" y="544.8" width="6" height="2" fill="#858585"/>
<rect x="255" y="552.3" width="5" height="1" fill="#646668"/>
<rect x="255" y="559.3" width="5" height="1" fill="#646668"/>
<rect x="255" y="566.3" width="5" height="1" fill="#646668"/>
<rect x="255" y="573.3" width="5" height="1" fill="#646668"/>
<rect x="255" y="579.7" width="6" height="2" fill="#858585"/>
<rect x="255" y="587.2" width="5" height="1" fill="#646668"/>
<rect x="255" y="594.2" width="5" height="1" fill="#646668"/>
<rect x="255" y="601.2" width="5" height="1" fill="#646668"/>
<rect x="255" y="608.2" width="5" height="1" fill="#646668"/>
<rect x="255" y="614.6" width="6" height="2" fill="#858585"/>
<rect x="255" y="622.1" width="5" height="1" fill="#646668"/>
<rect x="255" y="629.1" width="5" height="1" fill="#646668"/>
<rect x="255" y="636.1" width="5" height="1" fill="#646668"/>
<rect x="255" y="643.1" width="5" height="1" fill="#646668"/>
<rect x="255" y="649.5" width="6" height="2" fill="#858585"/>
<rect x="255" y="657.0" width="5" height="1" fill="#646668"/>
<rect x="255" y="664.0" width="5" height="1" fill="#646668"/>
<rect x="255" y="671.0" width="5" height="1" fill="#646668"/>
<rect x="255" y="677.9" width="5" height="1" fill="#646668"/>
<rect x="255" y="684.4" width="6" height="2" fill="#858585"/>
<rect x="255" y="691.9" width="5" height="1" fill="#646668"/>
<rect x="255" y="698.9" width="5" height="1" fill="#646668"/>
<rect x="255" y="705.9" width="5" height="1" fill="#646668"/>
<rect x="255" y="712.8" width="5" height="1" fill="#646668"/>
<rect x="255" y="719.3" width="6" height="2" fill="#858585"/>
<rect x="255" y="726.8" width="5" height="1" fill="#646668"/>
<rect x="255" y="733.8" width="5" height="1" fill="#646668"/>
<rect x="255" y="740.8" width="5" height="1" fill="#646668"/>
<rect x="255" y="747.7" width="5" height="1" fill="#646668"/>
<rect x="255" y="754.2" width="6" height="2" fill="#858585"/>
<rect x="255" y="761.7" width="5" height="1" fill="#646668"/>
<rect x="255" y="768.7" width="5" height="1" fill="#646668"/>
<rect x="255" y="775.7" width="5" height="1" fill="#646668"/>
<rect x="255" y="782.6" width="5" height="1" fill="#646668"/>
<rect x="255" y="789.1" width="6" height="2" fill="#858585"/>
<rect x="255" y="796.6" width="5" height="1" fill="#646668"/>
<rect x="255" y="803.6" width="5" height="1" fill="#646668"/>
<rect x="255" y="810.5" width="5" height="1" fill="#646668"/>
<rect x="255" y="817.5" width="5" height="1" fill="#646668"/>
<rect x="255" y="824.0" width="6" height="2" fill="#858585"/>
<rect x="255" y="831.5" width="5" height="1" fill="#646668"/>
<rect x="255" y="838.5" width="5" height="1" fill="#646668"/>
<rect x="255" y="845.4" width="5" height="1" fill="#646668"/>
<rect x="255" y="852.4" width="5" height="1" fill="#646668"/>
<rect x="255" y="858.9" width="6" height="2" fill="#858585"/>
<rect x="255" y="866.4" width="5" height="1" fill="#646668"/>
<rect x="255" y="873.4" width="5" height="1" fill="#646668"/>
<rect x="255" y="880.3" width="5" height="1" fill="#646668"/>
<rect x="255" y="887.3" width="5" height="1" fill="#646668"/>
<rect x="255" y="893.8" width="6" height="2" fill="#858585"/>
<rect x="255" y="901.3" width="5" height="1" fill="#646668"/>
<rect x="255" y="908.3" width="5" height="1" fill="#646668"/>
<rect x="255" y="915.2" width="5" height="1" fill="#646668"/>
<rect x="255" y="922.2" width="5" height="1" fill="#646668"/>
<rect x="255" y="928.7" width="6" height="2" fill="#858585"/>
<rect x="255" y="936.2" width="5" height="1" fill="#646668"/>
<rect x="255" y="943.1" width="5" height="1" fill="#646668"/>
<rect x="255" y="950.1" width="5" height="1" fill="#646668"/>
<rect x="255" y="957.1" width="5" height="1" fill="#646668"/>
<rect x="255" y="963.6" width="6" height="2" fill="#858585"/>
<rect x="255" y="971.1" width="5" height="1" fill="#646668"/>
<rect x="255" y="978.0" width="5" height="1" fill="#646668"/>
<rect x="255" y="985.0" width="5" height="1" fill="#646668"/>
<rect x="255" y="992.0" width="5" height="1" fill="#646668"/>
<rect x="255" y="998.5" width="6" height="2" fill="#858585"/>
<text transform="translate(273.6,91.4) rotate(-90) scale(.72,1)" font-size="10.5" fill="#2e3136" text-anchor="middle">-100</text>
<text transform="translate(273.6,161.2) rotate(-90) scale(.72,1)" font-size="10.5" fill="#596068" text-anchor="middle">0</text>
<text transform="translate(273.6,231.0) rotate(-90) scale(.72,1)" font-size="10.5" fill="#596068" text-anchor="middle">100</text>
<text transform="translate(273.6,300.8) rotate(-90) scale(.72,1)" font-size="10.5" fill="#596068" text-anchor="middle">200</text>
<text transform="translate(273.6,370.6) rotate(-90) scale(.72,1)" font-size="10.5" fill="#596068" text-anchor="middle">300</text>
<text transform="translate(273.6,440.4) rotate(-90) scale(.72,1)" font-size="10.5" fill="#596068" text-anchor="middle">400</text>
<text transform="translate(273.6,510.1) rotate(-90) scale(.72,1)" font-size="10.5" fill="#596068" text-anchor="middle">500</text>
<text transform="translate(273.6,579.9) rotate(-90) scale(.72,1)" font-size="10.5" fill="#596068" text-anchor="middle">600</text>
<text transform="translate(273.6,649.7) rotate(-90) scale(.72,1)" font-size="10.5" fill="#596068" text-anchor="middle">700</text>
<text transform="translate(273.6,719.5) rotate(-90) scale(.72,1)" font-size="10.5" fill="#596068" text-anchor="middle">800</text>
<text transform="translate(273.6,789.3) rotate(-90) scale(.72,1)" font-size="10.5" fill="#596068" text-anchor="middle">900</text>
<text transform="translate(273.6,859.1) rotate(-90) scale(.72,1)" font-size="10.5" fill="#596068" text-anchor="middle">1000</text>
<text transform="translate(273.6,928.9) rotate(-90) scale(.72,1)" font-size="10.5" fill="#596068" text-anchor="middle">1100</text>
<text transform="translate(273.6,998.7) rotate(-90) scale(.72,1)" font-size="10.5" fill="#596068" text-anchor="middle">1200</text>
</svg>
<div class="a" style="left:279px;top:100px;width:1px;height:900px;background:#8d8f94"></div>
<div class="a" style="left:255px;top:77px;width:2px;height:1px;background:#ccc"></div>
<div class="a" id="comp"></div>
<svg style="left:0;top:0" width="1920" height="1040" font-family="Liberation Sans, sans-serif">
<defs>
<clipPath id="c_eurasia"><path d="M932.9,450.9 930.8,448.6 927.5,446.2 923.1,447.0 923.4,441.0 921.3,440.2 923.1,434.3 923.7,430.3 923.1,426.0 921.9,423.2 925.7,420.4 932.3,420.8 938.2,421.2 944.2,421.6 945.6,417.3 945.9,411.3 943.0,406.6 936.7,404.2 935.2,401.8 940.6,400.3 944.7,401.0 944.7,396.7 948.9,398.3 949.8,397.5 954.0,395.1 954.8,391.9 959.0,390.4 961.4,387.6 963.5,383.6 970.0,382.0 974.7,381.2 975.0,376.1 973.6,373.7 973.6,367.8 981.0,365.0 980.1,369.8 981.6,371.7 978.6,375.7 979.2,377.7 982.2,379.7 986.6,378.1 991.7,380.1 998.5,377.7 1004.4,376.9 1005.9,378.5 1008.9,376.9 1011.9,374.5 1012.2,371.7 1011.9,367.8 1014.2,365.4 1016.3,365.0 1018.4,367.8 1021.1,367.8 1022.0,362.6 1019.3,361.0 1019.3,359.1 1023.8,357.9 1032.7,357.9 1039.2,356.3 1034.1,353.9 1029.7,353.9 1023.8,355.1 1017.5,356.7 1012.8,353.1 1013.1,348.8 1012.2,344.8 1013.4,343.2 1017.8,340.1 1022.3,336.1 1024.9,336.1 1021.1,332.9 1014.8,333.7 1012.8,338.1 1010.4,341.2 1004.4,344.8 1000.9,348.0 1000.6,353.1 1005.3,357.9 1000.0,361.4 998.5,367.8 997.0,370.9 995.5,371.3 992.0,373.7 988.1,374.1 987.2,370.9 984.8,365.0 982.8,359.9 981.0,356.3 980.1,359.9 974.7,363.0 973.3,363.4 970.3,363.8 966.1,360.3 964.6,355.9 964.4,353.9 964.4,348.8 968.2,345.6 974.7,342.0 979.2,340.1 983.7,336.1 986.6,332.1 992.0,327.0 988.1,324.2 995.5,321.1 1004.4,317.5 1011.9,315.5 1019.3,313.5 1026.1,311.9 1032.7,312.3 1041.6,314.7 1038.6,317.5 1047.5,318.7 1056.4,319.5 1068.3,324.2 1071.9,328.2 1069.8,331.0 1062.4,332.1 1053.5,330.2 1047.5,329.0 1052.0,334.1 1053.5,338.9 1059.4,340.5 1062.4,338.9 1069.8,337.7 1068.3,334.1 1074.2,330.2 1080.2,331.3 1080.2,328.2 1078.7,322.2 1086.1,323.0 1086.1,328.2 1092.1,325.4 1106.9,321.4 1109.9,323.0 1118.8,321.8 1127.7,321.1 1129.2,317.1 1139.6,319.1 1148.5,321.1 1152.9,323.0 1148.5,318.3 1148.5,312.3 1152.9,306.4 1157.4,303.6 1164.8,305.2 1164.8,312.3 1163.3,320.3 1167.8,326.2 1163.3,331.0 1169.3,328.2 1169.3,322.2 1175.2,320.3 1170.8,308.4 1178.2,306.4 1181.2,310.4 1187.1,314.3 1196.0,314.3 1190.1,306.4 1190.1,302.0 1207.9,300.9 1207.9,295.7 1222.7,293.3 1240.6,291.4 1258.4,285.8 1270.3,289.8 1285.1,292.5 1282.1,298.5 1267.3,302.4 1276.2,301.6 1286.6,302.4 1302.9,304.4 1314.8,303.6 1326.7,302.4 1334.1,309.2 1332.6,312.7 1344.5,310.4 1356.4,310.4 1365.3,306.4 1383.1,306.8 1395.0,310.4 1402.4,312.7 1412.8,312.3 1424.7,317.5 1430.6,317.9 1448.5,316.3 1455.9,320.3 1454.4,321.1 1457.4,316.3 1472.2,317.5 1484.1,320.7 1484.1,336.1 1479.6,338.1 1476.7,337.3 1482.0,346.0 1467.8,348.8 1455.9,355.9 1442.5,355.9 1436.6,356.7 1434.5,363.8 1430.6,364.6 1433.6,370.9 1430.6,376.5 1424.7,382.8 1420.2,384.0 1414.9,391.5 1412.8,385.6 1411.6,375.7 1412.8,367.8 1420.2,361.8 1429.2,353.9 1435.1,350.0 1433.6,346.8 1424.7,349.2 1414.9,350.0 1409.8,356.7 1397.4,357.9 1383.1,358.7 1374.8,358.7 1365.3,363.8 1359.4,369.8 1351.9,376.9 1357.9,379.7 1365.3,379.7 1369.2,382.8 1366.8,391.5 1365.9,401.4 1360.0,409.4 1351.9,418.1 1341.5,422.8 1337.7,426.0 1335.0,429.2 1334.7,431.9 1328.2,435.9 1328.2,438.3 1330.8,441.0 1333.8,447.0 1334.1,451.7 1332.6,454.5 1328.2,456.1 1324.6,456.9 1325.2,450.9 1326.1,447.0 1320.8,443.8 1321.3,440.6 1321.6,437.1 1319.0,435.1 1311.8,438.7 1310.4,439.9 1310.4,433.1 1312.4,432.7 1308.9,431.5 1304.4,435.9 1300.0,438.3 1299.1,439.1 1302.3,443.0 1302.9,445.8 1308.3,443.8 1313.3,445.4 1313.3,447.4 1308.9,448.6 1306.8,450.9 1303.8,454.9 1306.8,458.1 1308.6,463.6 1311.5,468.0 1311.5,471.1 1308.6,473.5 1311.8,475.1 1310.7,481.4 1308.9,483.0 1305.9,487.8 1304.7,490.5 1302.0,495.7 1300.3,496.9 1297.0,500.4 1296.1,501.2 1291.0,503.6 1288.7,505.2 1285.1,506.4 1281.2,508.0 1277.7,509.2 1277.1,513.1 1275.6,512.7 1275.9,508.8 1273.5,508.4 1270.3,508.4 1267.3,510.3 1266.7,511.5 1263.7,517.1 1263.7,519.4 1265.8,524.2 1268.8,527.8 1270.9,529.7 1273.2,536.1 1274.1,542.0 1273.8,546.4 1272.6,549.1 1268.2,552.3 1266.4,553.9 1265.5,555.9 1261.9,559.4 1260.8,555.1 1259.9,552.3 1256.9,551.5 1255.4,548.8 1253.9,545.2 1249.5,543.2 1249.2,540.4 1248.0,540.0 1246.5,540.8 1246.5,546.0 1244.4,550.7 1244.4,556.7 1247.1,560.2 1248.0,565.0 1251.0,566.6 1252.7,568.9 1256.6,574.5 1256.6,579.6 1257.8,583.6 1259.0,588.0 1256.9,588.4 1253.9,585.2 1250.4,582.0 1248.6,577.7 1247.4,571.7 1247.1,567.8 1245.6,566.6 1243.5,562.6 1241.5,561.8 1241.5,557.9 1242.3,551.9 1242.6,546.0 1241.2,538.9 1240.9,537.7 1239.7,532.1 1239.4,528.2 1237.3,526.2 1235.2,528.2 1232.5,530.9 1229.6,530.1 1230.2,524.2 1229.6,519.1 1227.5,515.1 1225.4,513.9 1223.6,510.7 1222.7,508.4 1222.1,505.2 1219.8,503.6 1218.3,505.2 1215.3,507.2 1213.2,508.0 1210.9,507.6 1207.9,508.8 1207.3,512.3 1206.4,513.5 1203.4,515.5 1201.7,517.9 1196.9,523.4 1193.9,527.8 1190.7,530.1 1189.8,530.9 1187.4,534.1 1188.0,541.6 1186.8,546.8 1186.8,552.3 1184.1,556.7 1181.8,558.7 1179.7,561.4 1177.0,557.9 1175.8,553.9 1174.3,548.0 1172.0,542.4 1169.9,535.3 1168.7,532.1 1167.2,526.2 1165.7,518.3 1165.4,512.3 1165.4,508.8 1164.8,506.4 1163.3,509.5 1159.8,511.5 1155.9,507.6 1154.4,504.8 1158.0,502.8 1153.5,500.8 1152.1,499.6 1149.7,498.5 1148.2,494.9 1147.3,492.9 1141.1,493.7 1133.6,494.1 1132.5,494.1 1124.7,492.9 1119.7,491.7 1118.2,486.2 1112.8,487.8 1108.4,487.4 1105.4,484.6 1102.2,483.0 1100.4,479.1 1098.0,473.9 1095.0,473.1 1093.5,474.7 1092.1,476.7 1093.2,480.6 1094.4,483.8 1097.1,487.4 1098.3,489.7 1100.4,495.3 1101.6,490.1 1102.8,493.3 1102.5,496.1 1105.4,497.7 1111.1,496.9 1113.7,493.3 1116.1,490.5 1117.0,489.0 1117.0,494.5 1117.9,497.3 1123.5,500.0 1127.1,504.4 1123.8,512.3 1121.2,518.3 1117.3,522.2 1113.4,524.2 1109.9,526.2 1104.5,530.1 1098.0,534.1 1093.5,538.1 1087.6,540.4 1083.2,542.8 1078.7,543.2 1077.8,540.8 1076.6,534.5 1076.3,528.6 1072.8,523.0 1069.8,516.3 1065.9,508.4 1063.8,502.4 1060.3,496.5 1057.9,490.5 1054.9,484.6 1052.9,482.2 1053.5,476.7 1051.7,482.6 1051.1,483.8 1049.0,480.6 1046.3,474.7 1045.4,469.6 1049.0,470.3 1051.4,469.6 1052.9,466.8 1053.5,462.8 1054.9,459.3 1055.8,452.9 1057.0,448.6 1054.9,448.6 1052.3,447.8 1049.0,450.5 1046.9,450.9 1044.5,449.0 1040.7,447.4 1039.8,449.8 1035.9,449.8 1033.3,448.2 1030.9,447.0 1030.3,443.4 1029.1,441.4 1028.8,437.9 1027.3,437.1 1027.3,435.1 1031.2,433.5 1035.6,433.5 1038.3,432.3 1035.6,431.1 1035.9,430.3 1042.5,430.7 1045.4,428.4 1048.4,427.2 1054.0,427.2 1057.3,430.0 1060.9,431.1 1063.8,431.5 1068.3,431.1 1072.8,429.2 1073.3,426.4 1071.3,423.2 1068.3,421.6 1063.8,418.1 1061.8,416.5 1058.8,414.5 1058.2,413.7 1062.4,411.3 1063.3,408.2 1066.2,407.0 1062.4,407.0 1060.9,407.4 1057.9,408.6 1054.3,410.2 1053.5,412.5 1057.6,414.1 1054.6,415.3 1051.4,417.3 1049.0,417.7 1046.0,413.7 1049.3,411.3 1046.0,410.9 1043.9,409.0 1040.7,409.4 1039.2,412.1 1037.7,414.5 1034.7,418.5 1034.4,421.6 1032.4,422.4 1031.2,425.2 1032.7,427.2 1033.3,429.2 1035.6,430.3 1035.3,431.1 1032.7,431.1 1030.6,432.3 1028.8,433.5 1027.3,434.7 1026.7,432.7 1026.7,431.9 1023.8,431.5 1022.0,431.5 1020.8,434.3 1019.0,434.3 1017.8,432.7 1016.6,435.1 1017.8,437.9 1017.5,439.5 1020.8,442.2 1020.8,444.2 1019.3,443.0 1017.8,443.4 1018.4,445.4 1017.2,445.0 1018.1,449.0 1016.3,449.0 1015.7,449.4 1013.9,447.8 1012.8,444.2 1013.9,442.2 1012.2,441.8 1011.0,439.9 1009.5,436.7 1008.6,435.5 1007.1,433.5 1007.1,429.6 1006.8,427.6 1004.4,425.6 1003.3,424.8 1000.0,422.8 998.2,421.2 994.6,418.5 993.8,415.3 992.3,414.1 990.8,416.1 989.6,413.3 990.5,412.5 986.3,413.7 986.6,415.7 986.0,418.5 989.6,420.8 991.1,424.4 994.0,427.2 997.6,427.6 997.0,429.6 999.7,430.7 1003.0,432.7 1004.4,434.7 1004.1,435.9 1000.6,433.1 998.8,435.1 998.8,436.7 1000.6,439.1 998.5,441.4 997.3,443.4 996.1,443.4 996.1,442.2 997.6,439.1 995.8,435.1 994.0,434.3 993.5,432.7 991.7,431.9 989.9,430.3 986.9,429.6 985.7,428.0 982.5,425.6 980.7,423.6 980.1,421.2 978.6,418.9 975.9,417.7 973.9,419.7 971.8,420.1 970.0,421.6 967.9,422.8 965.5,422.0 963.8,421.6 961.4,421.2 959.0,422.4 958.7,425.2 959.3,426.0 959.0,427.6 956.0,429.6 952.5,431.1 951.9,432.3 949.5,435.5 948.6,437.5 950.1,439.9 948.0,441.8 947.1,444.2 943.9,447.4 943.0,448.2 939.1,448.2 936.4,448.2 933.5,450.5Z"/></clipPath>
<clipPath id="c_samerica"><path d="M719.9,559.0 721.4,561.8 725.0,551.9 727.3,549.9 732.7,548.4 737.1,544.4 737.7,547.2 736.3,550.7 738.0,550.3 741.6,548.0 741.6,545.2 746.1,549.1 747.5,551.9 753.5,551.5 757.9,553.1 765.4,551.1 768.3,554.7 769.8,559.8 775.8,565.8 780.2,569.7 786.1,569.7 789.7,570.5 795.1,574.5 797.1,576.9 801.0,586.4 801.0,593.5 805.5,595.5 808.4,595.9 817.3,602.2 818.8,604.2 826.2,605.0 833.7,606.6 839.6,612.5 844.7,614.5 846.1,621.6 845.8,625.6 843.2,631.9 839.6,637.1 835.2,645.0 833.7,652.9 833.7,662.8 831.6,670.7 829.8,673.9 827.7,680.6 824.8,684.6 821.2,684.6 816.7,685.8 812.0,688.5 806.9,693.7 805.2,698.4 805.5,702.8 804.6,706.8 801.0,712.3 797.4,718.2 794.8,721.0 790.9,727.0 787.6,730.9 786.1,732.1 782.6,731.7 777.8,730.1 776.1,728.1 776.1,730.5 779.6,734.1 781.1,737.6 778.7,744.0 774.3,746.8 765.4,747.9 764.5,747.1 764.8,753.9 760.0,756.7 756.5,755.1 756.5,759.8 760.6,761.8 756.5,763.8 755.6,769.7 750.5,773.7 749.0,775.7 753.5,779.6 754.1,782.8 749.0,789.5 744.6,793.5 746.4,800.6 745.8,801.8 749.0,807.3 755.9,810.1 752.0,811.7 749.6,814.9 744.6,813.3 738.6,809.3 732.7,805.4 728.2,801.4 725.9,793.5 725.3,785.6 725.0,778.8 728.8,773.7 731.2,767.7 729.1,765.0 730.3,759.0 730.6,751.9 731.2,746.0 732.1,740.8 732.7,738.8 734.2,734.1 736.6,726.2 737.1,716.3 737.1,710.3 738.6,702.4 740.1,694.5 740.4,686.6 741.3,676.7 740.7,666.4 737.1,662.0 732.7,658.8 726.2,654.1 722.9,648.5 720.5,641.0 717.2,633.1 714.9,626.0 712.2,620.4 708.3,617.3 708.0,612.1 711.0,607.0 712.5,603.4 709.2,602.6 709.8,597.5 711.6,593.5 711.9,590.3 715.5,587.6 716.4,583.6 719.3,583.2 720.2,578.5 719.3,571.7 719.6,567.0 718.1,565.0Z"/></clipPath>
<clipPath id="c_namerica"><path d="M450.5,333.7 460.9,330.2 469.0,331.3 463.9,328.2 455.0,323.0 465.4,319.1 474.3,314.3 484.7,311.2 498.1,313.1 509.9,315.1 521.8,316.3 530.7,317.9 542.6,320.3 550.0,318.3 560.4,316.3 567.9,314.3 572.3,317.5 579.7,316.3 587.2,317.1 602.0,320.3 609.4,323.4 608.0,325.0 621.3,325.0 628.7,326.2 629.3,322.2 637.6,322.2 646.6,325.0 657.0,325.0 659.9,322.2 664.4,323.4 665.9,318.3 662.9,315.1 664.4,311.2 668.8,308.8 673.9,312.3 677.7,317.9 680.7,322.6 688.1,321.1 689.6,327.0 695.0,321.4 695.6,317.5 704.5,317.5 708.0,320.3 707.4,324.2 704.5,329.8 698.5,331.3 694.1,331.0 694.7,334.1 690.2,337.3 686.7,340.1 680.7,341.2 679.2,344.8 671.8,348.8 668.2,355.1 667.9,360.7 674.2,367.8 682.2,367.8 688.1,370.6 697.0,374.5 705.1,375.3 705.4,383.6 709.8,389.6 713.1,391.1 715.5,385.6 713.1,377.3 720.8,372.5 722.0,365.4 716.7,360.7 719.3,355.1 717.8,346.8 725.3,347.2 731.2,346.4 737.1,350.8 742.2,351.9 743.1,359.1 748.1,362.6 755.0,357.9 757.9,354.3 762.4,360.7 766.8,368.6 771.3,374.5 778.7,377.7 783.2,383.6 784.1,387.6 779.6,390.0 771.3,394.7 760.9,394.7 752.0,394.7 746.1,399.5 741.6,405.0 746.6,401.4 752.0,399.1 758.2,399.9 755.6,404.2 757.0,408.2 760.9,411.3 766.0,412.1 769.8,407.4 771.6,411.3 767.7,414.5 760.9,416.9 755.0,420.8 752.9,418.1 757.9,413.7 752.0,414.9 749.6,416.5 744.6,418.9 741.0,420.8 739.2,425.2 741.6,428.0 737.1,429.6 731.2,431.1 729.4,433.1 728.8,437.1 726.2,439.5 724.4,445.0 723.2,447.4 725.0,453.7 721.4,456.5 717.8,459.3 714.0,462.4 708.9,467.6 707.7,473.5 710.1,481.4 711.9,487.8 710.7,493.7 708.3,493.7 706.3,488.6 703.6,483.4 703.9,478.7 700.0,474.3 695.9,475.9 691.1,473.1 685.2,473.5 684.3,477.9 680.1,477.9 674.8,476.3 670.3,475.9 666.8,478.7 661.4,482.6 660.2,488.6 660.8,490.9 659.0,498.5 659.0,505.2 660.8,511.1 663.2,517.1 667.3,519.8 670.3,521.4 675.7,519.8 679.8,516.7 681.0,510.3 686.7,508.0 691.1,508.4 691.7,511.9 689.3,516.3 688.7,521.0 687.2,523.8 685.5,530.5 688.1,530.9 694.1,530.5 698.5,530.9 702.4,534.1 701.5,542.0 700.9,549.9 703.0,553.9 705.4,557.9 708.9,558.7 713.1,555.5 716.9,556.3 719.9,559.0 718.1,565.0 716.7,560.6 713.1,558.3 710.7,561.0 711.0,564.2 707.4,563.0 703.0,560.6 701.2,559.0 697.6,554.7 694.7,550.3 692.3,546.0 689.3,542.4 685.8,540.8 680.7,538.5 675.4,535.7 670.3,529.7 665.9,530.9 662.0,531.3 655.5,527.8 648.0,523.8 641.8,520.6 636.5,515.1 636.8,508.4 633.5,501.6 628.1,493.7 624.6,488.2 621.3,483.4 616.3,478.7 613.9,470.7 608.8,468.0 608.8,472.3 612.4,477.9 614.8,483.8 618.6,491.3 621.6,497.3 624.3,501.2 622.8,502.8 619.8,498.5 616.3,494.9 616.3,490.5 611.5,487.0 608.0,483.4 610.3,479.8 605.9,474.7 602.9,468.0 601.7,464.8 597.9,459.7 591.6,456.9 587.5,448.6 585.7,443.8 581.8,437.1 580.3,433.5 580.6,427.2 581.2,417.3 581.2,410.5 579.4,401.8 584.2,402.6 584.8,399.5 578.8,395.5 572.3,391.5 569.3,385.6 563.4,378.9 561.0,373.7 556.0,368.6 550.0,362.6 542.6,361.0 535.2,356.7 524.8,355.9 515.9,352.3 508.5,355.9 499.5,358.7 499.5,352.7 504.0,351.1 498.1,353.9 493.6,357.9 491.2,363.0 484.7,367.0 478.8,370.9 471.3,374.5 465.4,376.5 460.0,377.7 465.4,373.3 472.8,370.9 478.8,365.8 481.7,361.0 475.8,361.0 468.4,361.4 469.0,356.7 460.9,354.7 457.1,349.6 460.0,344.8 465.4,343.6 471.3,341.2 471.3,338.1 465.4,337.7 455.9,337.7 450.5,333.7Z"/></clipPath>
<clipPath id="c_africa"><path d="M932.0,451.7 933.8,451.3 940.6,454.1 943.6,454.5 949.5,451.7 954.0,449.0 958.4,447.8 964.4,447.8 971.8,447.0 978.6,445.8 982.2,447.0 980.7,450.9 981.3,454.9 979.5,457.7 979.5,459.3 982.5,462.0 988.7,463.2 994.9,465.6 998.5,469.9 1003.0,472.7 1007.4,473.1 1008.9,470.7 1008.9,466.4 1013.7,463.2 1018.1,464.4 1023.8,467.6 1029.7,469.6 1035.6,471.1 1038.3,469.9 1041.6,468.8 1045.4,469.6 1046.0,474.7 1046.6,478.7 1049.0,483.4 1050.5,488.6 1053.5,496.5 1055.5,502.4 1059.4,510.3 1060.0,515.9 1063.8,522.2 1066.8,531.7 1071.3,536.1 1075.7,542.0 1078.1,544.0 1077.8,548.0 1080.2,551.9 1083.2,552.3 1089.1,549.5 1095.0,548.8 1101.9,546.8 1101.3,552.3 1098.0,561.8 1095.0,569.7 1092.1,575.7 1086.1,583.6 1084.0,585.6 1078.7,591.5 1074.2,597.5 1072.8,600.6 1071.0,602.6 1068.3,607.4 1067.4,609.7 1065.3,615.3 1066.2,620.4 1066.8,627.2 1067.7,633.1 1069.8,635.1 1070.1,643.0 1070.7,650.9 1070.4,652.9 1068.3,658.8 1063.8,662.0 1059.4,664.8 1056.4,668.3 1053.2,671.9 1053.5,676.7 1054.9,680.6 1054.9,688.5 1049.0,693.3 1046.3,696.5 1047.2,702.4 1045.7,707.5 1041.6,711.9 1038.6,717.4 1034.1,723.4 1032.4,724.2 1025.8,728.1 1019.3,728.5 1014.8,728.9 1008.9,731.3 1004.4,729.3 1003.9,724.2 1003.0,720.2 1000.9,712.3 998.5,706.8 994.6,700.4 993.8,694.5 992.3,684.6 992.6,684.2 989.6,674.7 986.6,666.8 984.5,661.6 984.5,656.9 986.6,647.0 989.3,643.4 990.5,637.1 988.7,629.1 988.7,628.3 986.0,617.7 985.1,613.3 984.5,612.5 982.2,608.5 978.0,603.0 975.6,596.3 977.1,593.5 977.7,591.9 978.6,589.5 978.6,584.4 978.3,579.6 977.7,577.7 975.9,575.7 974.2,575.7 970.3,576.1 967.3,576.5 964.4,571.7 962.6,568.6 959.6,568.2 954.3,568.9 953.1,569.3 949.5,570.9 948.9,571.7 943.6,574.5 940.0,573.3 937.6,572.9 931.7,574.9 927.2,576.1 922.8,573.7 917.4,568.6 915.3,566.2 912.4,564.2 910.3,559.8 910.0,556.7 908.8,555.9 905.5,550.7 904.4,549.1 902.0,546.8 899.9,544.4 899.6,540.4 899.0,537.3 897.5,535.3 899.6,530.9 900.5,530.1 901.1,522.2 902.0,521.8 901.1,516.3 898.7,511.1 899.3,506.4 902.0,499.6 905.0,494.5 906.4,490.1 910.0,484.6 911.2,483.0 915.3,480.6 919.2,477.5 920.7,473.1 920.4,468.8 921.9,465.6 926.9,460.4 929.3,458.9 931.1,454.1Z"/></clipPath>
<clipPath id="c_comp"><rect x="280" y="161" width="1340" height="753"/></clipPath>
</defs>
<g clip-path="url(#c_comp)">
<g fill="#7030a0" stroke="rgba(255,255,255,.55)" stroke-width=".5" stroke-linejoin="round">
<path d="M450.5,333.7 460.9,330.2 469.0,331.3 463.9,328.2 455.0,323.0 465.4,319.1 474.3,314.3 484.7,311.2 498.1,313.1 509.9,315.1 521.8,316.3 530.7,317.9 542.6,320.3 550.0,318.3 560.4,316.3 567.9,314.3 572.3,317.5 579.7,316.3 587.2,317.1 602.0,320.3 609.4,323.4 608.0,325.0 621.3,325.0 628.7,326.2 629.3,322.2 637.6,322.2 646.6,325.0 657.0,325.0 659.9,322.2 664.4,323.4 665.9,318.3 662.9,315.1 664.4,311.2 668.8,308.8 673.9,312.3 677.7,317.9 680.7,322.6 688.1,321.1 689.6,327.0 695.0,321.4 695.6,317.5 704.5,317.5 708.0,320.3 707.4,324.2 704.5,329.8 698.5,331.3 694.1,331.0 694.7,334.1 690.2,337.3 686.7,340.1 680.7,341.2 679.2,344.8 671.8,348.8 668.2,355.1 667.9,360.7 674.2,367.8 682.2,367.8 688.1,370.6 697.0,374.5 705.1,375.3 705.4,383.6 709.8,389.6 713.1,391.1 715.5,385.6 713.1,377.3 720.8,372.5 722.0,365.4 716.7,360.7 719.3,355.1 717.8,346.8 725.3,347.2 731.2,346.4 737.1,350.8 742.2,351.9 743.1,359.1 748.1,362.6 755.0,357.9 757.9,354.3 762.4,360.7 766.8,368.6 771.3,374.5 778.7,377.7 783.2,383.6 784.1,387.6 779.6,390.0 771.3,394.7 760.9,394.7 752.0,394.7 746.1,399.5 741.6,405.0 746.6,401.4 752.0,399.1 758.2,399.9 755.6,404.2 757.0,408.2 760.9,411.3 766.0,412.1 769.8,407.4 771.6,411.3 767.7,414.5 760.9,416.9 755.0,420.8 752.9,418.1 757.9,413.7 752.0,414.9 749.6,416.5 744.6,418.9 741.0,420.8 739.2,425.2 741.6,428.0 737.1,429.6 731.2,431.1 729.4,433.1 728.8,437.1 726.2,439.5 724.4,445.0 723.2,447.4 725.0,453.7 721.4,456.5 717.8,459.3 714.0,462.4 708.9,467.6 707.7,473.5 710.1,481.4 711.9,487.8 710.7,493.7 708.3,493.7 706.3,488.6 703.6,483.4 703.9,478.7 700.0,474.3 695.9,475.9 691.1,473.1 685.2,473.5 684.3,477.9 680.1,477.9 674.8,476.3 670.3,475.9 666.8,478.7 661.4,482.6 660.2,488.6 660.8,490.9 659.0,498.5 659.0,505.2 660.8,511.1 663.2,517.1 667.3,519.8 670.3,521.4 675.7,519.8 679.8,516.7 681.0,510.3 686.7,508.0 691.1,508.4 691.7,511.9 689.3,516.3 688.7,521.0 687.2,523.8 685.5,530.5 688.1,530.9 694.1,530.5 698.5,530.9 702.4,534.1 701.5,542.0 700.9,549.9 703.0,553.9 705.4,557.9 708.9,558.7 713.1,555.5 716.9,556.3 719.9,559.0 718.1,565.0 716.7,560.6 713.1,558.3 710.7,561.0 711.0,564.2 707.4,563.0 703.0,560.6 701.2,559.0 697.6,554.7 694.7,550.3 692.3,546.0 689.3,542.4 685.8,540.8 680.7,538.5 675.4,535.7 670.3,529.7 665.9,530.9 662.0,531.3 655.5,527.8 648.0,523.8 641.8,520.6 636.5,515.1 636.8,508.4 633.5,501.6 628.1,493.7 624.6,488.2 621.3,483.4 616.3,478.7 613.9,470.7 608.8,468.0 608.8,472.3 612.4,477.9 614.8,483.8 618.6,491.3 621.6,497.3 624.3,501.2 622.8,502.8 619.8,498.5 616.3,494.9 616.3,490.5 611.5,487.0 608.0,483.4 610.3,479.8 605.9,474.7 602.9,468.0 601.7,464.8 597.9,459.7 591.6,456.9 587.5,448.6 585.7,443.8 581.8,437.1 580.3,433.5 580.6,427.2 581.2,417.3 581.2,410.5 579.4,401.8 584.2,402.6 584.8,399.5 578.8,395.5 572.3,391.5 569.3,385.6 563.4,378.9 561.0,373.7 556.0,368.6 550.0,362.6 542.6,361.0 535.2,356.7 524.8,355.9 515.9,352.3 508.5,355.9 499.5,358.7 499.5,352.7 504.0,351.1 498.1,353.9 493.6,357.9 491.2,363.0 484.7,367.0 478.8,370.9 471.3,374.5 465.4,376.5 460.0,377.7 465.4,373.3 472.8,370.9 478.8,365.8 481.7,361.0 475.8,361.0 468.4,361.4 469.0,356.7 460.9,354.7 457.1,349.6 460.0,344.8 465.4,343.6 471.3,341.2 471.3,338.1 465.4,337.7 455.9,337.7 450.5,333.7Z"/>
<path d="M854.5,262.4 875.2,264.8 887.1,267.2 907.9,269.6 915.3,271.2 902.0,275.5 893.1,282.6 896.0,289.4 890.1,295.7 888.6,302.4 881.2,307.2 884.2,314.3 876.7,317.9 869.3,322.2 855.9,323.8 845.5,330.2 838.1,333.3 830.7,336.1 827.1,343.2 822.4,351.9 818.8,356.7 812.9,353.5 805.5,350.0 801.0,344.0 796.0,339.3 790.6,330.2 790.6,322.2 798.0,318.3 787.6,315.1 786.1,310.4 783.2,302.4 775.8,294.5 765.4,291.7 750.5,292.5 740.1,288.6 735.7,284.6 732.7,282.2 746.1,277.5 755.0,271.9 771.3,268.8 795.1,267.2 818.8,264.4 836.6,262.8Z"/>
<path d="M876.7,334.1 884.2,330.6 893.1,331.7 902.0,330.2 906.4,331.3 909.4,336.1 905.0,338.9 894.6,342.4 887.1,340.9 882.1,340.1 884.2,336.9 878.2,336.5Z"/>
<path d="M719.9,559.0 721.4,561.8 725.0,551.9 727.3,549.9 732.7,548.4 737.1,544.4 737.7,547.2 736.3,550.7 738.0,550.3 741.6,548.0 741.6,545.2 746.1,549.1 747.5,551.9 753.5,551.5 757.9,553.1 765.4,551.1 768.3,554.7 769.8,559.8 775.8,565.8 780.2,569.7 786.1,569.7 789.7,570.5 795.1,574.5 797.1,576.9 801.0,586.4 801.0,593.5 805.5,595.5 808.4,595.9 817.3,602.2 818.8,604.2 826.2,605.0 833.7,606.6 839.6,612.5 844.7,614.5 846.1,621.6 845.8,625.6 843.2,631.9 839.6,637.1 835.2,645.0 833.7,652.9 833.7,662.8 831.6,670.7 829.8,673.9 827.7,680.6 824.8,684.6 821.2,684.6 816.7,685.8 812.0,688.5 806.9,693.7 805.2,698.4 805.5,702.8 804.6,706.8 801.0,712.3 797.4,718.2 794.8,721.0 790.9,727.0 787.6,730.9 786.1,732.1 782.6,731.7 777.8,730.1 776.1,728.1 776.1,730.5 779.6,734.1 781.1,737.6 778.7,744.0 774.3,746.8 765.4,747.9 764.5,747.1 764.8,753.9 760.0,756.7 756.5,755.1 756.5,759.8 760.6,761.8 756.5,763.8 755.6,769.7 750.5,773.7 749.0,775.7 753.5,779.6 754.1,782.8 749.0,789.5 744.6,793.5 746.4,800.6 745.8,801.8 749.0,807.3 755.9,810.1 752.0,811.7 749.6,814.9 744.6,813.3 738.6,809.3 732.7,805.4 728.2,801.4 725.9,793.5 725.3,785.6 725.0,778.8 728.8,773.7 731.2,767.7 729.1,765.0 730.3,759.0 730.6,751.9 731.2,746.0 732.1,740.8 732.7,738.8 734.2,734.1 736.6,726.2 737.1,716.3 737.1,710.3 738.6,702.4 740.1,694.5 740.4,686.6 741.3,676.7 740.7,666.4 737.1,662.0 732.7,658.8 726.2,654.1 722.9,648.5 720.5,641.0 717.2,633.1 714.9,626.0 712.2,620.4 708.3,617.3 708.0,612.1 711.0,607.0 712.5,603.4 709.2,602.6 709.8,597.5 711.6,593.5 711.9,590.3 715.5,587.6 716.4,583.6 719.3,583.2 720.2,578.5 719.3,571.7 719.6,567.0 718.1,565.0Z"/>
<path d="M932.0,451.7 933.8,451.3 940.6,454.1 943.6,454.5 949.5,451.7 954.0,449.0 958.4,447.8 964.4,447.8 971.8,447.0 978.6,445.8 982.2,447.0 980.7,450.9 981.3,454.9 979.5,457.7 979.5,459.3 982.5,462.0 988.7,463.2 994.9,465.6 998.5,469.9 1003.0,472.7 1007.4,473.1 1008.9,470.7 1008.9,466.4 1013.7,463.2 1018.1,464.4 1023.8,467.6 1029.7,469.6 1035.6,471.1 1038.3,469.9 1041.6,468.8 1045.4,469.6 1046.0,474.7 1046.6,478.7 1049.0,483.4 1050.5,488.6 1053.5,496.5 1055.5,502.4 1059.4,510.3 1060.0,515.9 1063.8,522.2 1066.8,531.7 1071.3,536.1 1075.7,542.0 1078.1,544.0 1077.8,548.0 1080.2,551.9 1083.2,552.3 1089.1,549.5 1095.0,548.8 1101.9,546.8 1101.3,552.3 1098.0,561.8 1095.0,569.7 1092.1,575.7 1086.1,583.6 1084.0,585.6 1078.7,591.5 1074.2,597.5 1072.8,600.6 1071.0,602.6 1068.3,607.4 1067.4,609.7 1065.3,615.3 1066.2,620.4 1066.8,627.2 1067.7,633.1 1069.8,635.1 1070.1,643.0 1070.7,650.9 1070.4,652.9 1068.3,658.8 1063.8,662.0 1059.4,664.8 1056.4,668.3 1053.2,671.9 1053.5,676.7 1054.9,680.6 1054.9,688.5 1049.0,693.3 1046.3,696.5 1047.2,702.4 1045.7,707.5 1041.6,711.9 1038.6,717.4 1034.1,723.4 1032.4,724.2 1025.8,728.1 1019.3,728.5 1014.8,728.9 1008.9,731.3 1004.4,729.3 1003.9,724.2 1003.0,720.2 1000.9,712.3 998.5,706.8 994.6,700.4 993.8,694.5 992.3,684.6 992.6,684.2 989.6,674.7 986.6,666.8 984.5,661.6 984.5,656.9 986.6,647.0 989.3,643.4 990.5,637.1 988.7,629.1 988.7,628.3 986.0,617.7 985.1,613.3 984.5,612.5 982.2,608.5 978.0,603.0 975.6,596.3 977.1,593.5 977.7,591.9 978.6,589.5 978.6,584.4 978.3,579.6 977.7,577.7 975.9,575.7 974.2,575.7 970.3,576.1 967.3,576.5 964.4,571.7 962.6,568.6 959.6,568.2 954.3,568.9 953.1,569.3 949.5,570.9 948.9,571.7 943.6,574.5 940.0,573.3 937.6,572.9 931.7,574.9 927.2,576.1 922.8,573.7 917.4,568.6 915.3,566.2 912.4,564.2 910.3,559.8 910.0,556.7 908.8,555.9 905.5,550.7 904.4,549.1 902.0,546.8 899.9,544.4 899.6,540.4 899.0,537.3 897.5,535.3 899.6,530.9 900.5,530.1 901.1,522.2 902.0,521.8 901.1,516.3 898.7,511.1 899.3,506.4 902.0,499.6 905.0,494.5 906.4,490.1 910.0,484.6 911.2,483.0 915.3,480.6 919.2,477.5 920.7,473.1 920.4,468.8 921.9,465.6 926.9,460.4 929.3,458.9 931.1,454.1Z"/>
<path d="M1095.9,641.0 1099.5,654.9 1097.4,660.8 1096.2,666.8 1093.5,676.7 1090.6,688.5 1089.1,692.9 1083.7,694.9 1080.2,691.7 1078.4,684.6 1078.1,678.6 1081.1,672.7 1081.1,666.8 1080.2,660.8 1081.7,657.7 1087.0,655.7 1090.6,652.1 1092.7,647.0Z"/>
<path d="M932.9,450.9 930.8,448.6 927.5,446.2 923.1,447.0 923.4,441.0 921.3,440.2 923.1,434.3 923.7,430.3 923.1,426.0 921.9,423.2 925.7,420.4 932.3,420.8 938.2,421.2 944.2,421.6 945.6,417.3 945.9,411.3 943.0,406.6 936.7,404.2 935.2,401.8 940.6,400.3 944.7,401.0 944.7,396.7 948.9,398.3 949.8,397.5 954.0,395.1 954.8,391.9 959.0,390.4 961.4,387.6 963.5,383.6 970.0,382.0 974.7,381.2 975.0,376.1 973.6,373.7 973.6,367.8 981.0,365.0 980.1,369.8 981.6,371.7 978.6,375.7 979.2,377.7 982.2,379.7 986.6,378.1 991.7,380.1 998.5,377.7 1004.4,376.9 1005.9,378.5 1008.9,376.9 1011.9,374.5 1012.2,371.7 1011.9,367.8 1014.2,365.4 1016.3,365.0 1018.4,367.8 1021.1,367.8 1022.0,362.6 1019.3,361.0 1019.3,359.1 1023.8,357.9 1032.7,357.9 1039.2,356.3 1034.1,353.9 1029.7,353.9 1023.8,355.1 1017.5,356.7 1012.8,353.1 1013.1,348.8 1012.2,344.8 1013.4,343.2 1017.8,340.1 1022.3,336.1 1024.9,336.1 1021.1,332.9 1014.8,333.7 1012.8,338.1 1010.4,341.2 1004.4,344.8 1000.9,348.0 1000.6,353.1 1005.3,357.9 1000.0,361.4 998.5,367.8 997.0,370.9 995.5,371.3 992.0,373.7 988.1,374.1 987.2,370.9 984.8,365.0 982.8,359.9 981.0,356.3 980.1,359.9 974.7,363.0 973.3,363.4 970.3,363.8 966.1,360.3 964.6,355.9 964.4,353.9 964.4,348.8 968.2,345.6 974.7,342.0 979.2,340.1 983.7,336.1 986.6,332.1 992.0,327.0 988.1,324.2 995.5,321.1 1004.4,317.5 1011.9,315.5 1019.3,313.5 1026.1,311.9 1032.7,312.3 1041.6,314.7 1038.6,317.5 1047.5,318.7 1056.4,319.5 1068.3,324.2 1071.9,328.2 1069.8,331.0 1062.4,332.1 1053.5,330.2 1047.5,329.0 1052.0,334.1 1053.5,338.9 1059.4,340.5 1062.4,338.9 1069.8,337.7 1068.3,334.1 1074.2,330.2 1080.2,331.3 1080.2,328.2 1078.7,322.2 1086.1,323.0 1086.1,328.2 1092.1,325.4 1106.9,321.4 1109.9,323.0 1118.8,321.8 1127.7,321.1 1129.2,317.1 1139.6,319.1 1148.5,321.1 1152.9,323.0 1148.5,318.3 1148.5,312.3 1152.9,306.4 1157.4,303.6 1164.8,305.2 1164.8,312.3 1163.3,320.3 1167.8,326.2 1163.3,331.0 1169.3,328.2 1169.3,322.2 1175.2,320.3 1170.8,308.4 1178.2,306.4 1181.2,310.4 1187.1,314.3 1196.0,314.3 1190.1,306.4 1190.1,302.0 1207.9,300.9 1207.9,295.7 1222.7,293.3 1240.6,291.4 1258.4,285.8 1270.3,289.8 1285.1,292.5 1282.1,298.5 1267.3,302.4 1276.2,301.6 1286.6,302.4 1302.9,304.4 1314.8,303.6 1326.7,302.4 1334.1,309.2 1332.6,312.7 1344.5,310.4 1356.4,310.4 1365.3,306.4 1383.1,306.8 1395.0,310.4 1402.4,312.7 1412.8,312.3 1424.7,317.5 1430.6,317.9 1448.5,316.3 1455.9,320.3 1454.4,321.1 1457.4,316.3 1472.2,317.5 1484.1,320.7 1484.1,336.1 1479.6,338.1 1476.7,337.3 1482.0,346.0 1467.8,348.8 1455.9,355.9 1442.5,355.9 1436.6,356.7 1434.5,363.8 1430.6,364.6 1433.6,370.9 1430.6,376.5 1424.7,382.8 1420.2,384.0 1414.9,391.5 1412.8,385.6 1411.6,375.7 1412.8,367.8 1420.2,361.8 1429.2,353.9 1435.1,350.0 1433.6,346.8 1424.7,349.2 1414.9,350.0 1409.8,356.7 1397.4,357.9 1383.1,358.7 1374.8,358.7 1365.3,363.8 1359.4,369.8 1351.9,376.9 1357.9,379.7 1365.3,379.7 1369.2,382.8 1366.8,391.5 1365.9,401.4 1360.0,409.4 1351.9,418.1 1341.5,422.8 1337.7,426.0 1335.0,429.2 1334.7,431.9 1328.2,435.9 1328.2,438.3 1330.8,441.0 1333.8,447.0 1334.1,451.7 1332.6,454.5 1328.2,456.1 1324.6,456.9 1325.2,450.9 1326.1,447.0 1320.8,443.8 1321.3,440.6 1321.6,437.1 1319.0,435.1 1311.8,438.7 1310.4,439.9 1310.4,433.1 1312.4,432.7 1308.9,431.5 1304.4,435.9 1300.0,438.3 1299.1,439.1 1302.3,443.0 1302.9,445.8 1308.3,443.8 1313.3,445.4 1313.3,447.4 1308.9,448.6 1306.8,450.9 1303.8,454.9 1306.8,458.1 1308.6,463.6 1311.5,468.0 1311.5,471.1 1308.6,473.5 1311.8,475.1 1310.7,481.4 1308.9,483.0 1305.9,487.8 1304.7,490.5 1302.0,495.7 1300.3,496.9 1297.0,500.4 1296.1,501.2 1291.0,503.6 1288.7,505.2 1285.1,506.4 1281.2,508.0 1277.7,509.2 1277.1,513.1 1275.6,512.7 1275.9,508.8 1273.5,508.4 1270.3,508.4 1267.3,510.3 1266.7,511.5 1263.7,517.1 1263.7,519.4 1265.8,524.2 1268.8,527.8 1270.9,529.7 1273.2,536.1 1274.1,542.0 1273.8,546.4 1272.6,549.1 1268.2,552.3 1266.4,553.9 1265.5,555.9 1261.9,559.4 1260.8,555.1 1259.9,552.3 1256.9,551.5 1255.4,548.8 1253.9,545.2 1249.5,543.2 1249.2,540.4 1248.0,540.0 1246.5,540.8 1246.5,546.0 1244.4,550.7 1244.4,556.7 1247.1,560.2 1248.0,565.0 1251.0,566.6 1252.7,568.9 1256.6,574.5 1256.6,579.6 1257.8,583.6 1259.0,588.0 1256.9,588.4 1253.9,585.2 1250.4,582.0 1248.6,577.7 1247.4,571.7 1247.1,567.8 1245.6,566.6 1243.5,562.6 1241.5,561.8 1241.5,557.9 1242.3,551.9 1242.6,546.0 1241.2,538.9 1240.9,537.7 1239.7,532.1 1239.4,528.2 1237.3,526.2 1235.2,528.2 1232.5,530.9 1229.6,530.1 1230.2,524.2 1229.6,519.1 1227.5,515.1 1225.4,513.9 1223.6,510.7 1222.7,508.4 1222.1,505.2 1219.8,503.6 1218.3,505.2 1215.3,507.2 1213.2,508.0 1210.9,507.6 1207.9,508.8 1207.3,512.3 1206.4,513.5 1203.4,515.5 1201.7,517.9 1196.9,523.4 1193.9,527.8 1190.7,530.1 1189.8,530.9 1187.4,534.1 1188.0,541.6 1186.8,546.8 1186.8,552.3 1184.1,556.7 1181.8,558.7 1179.7,561.4 1177.0,557.9 1175.8,553.9 1174.3,548.0 1172.0,542.4 1169.9,535.3 1168.7,532.1 1167.2,526.2 1165.7,518.3 1165.4,512.3 1165.4,508.8 1164.8,506.4 1163.3,509.5 1159.8,511.5 1155.9,507.6 1154.4,504.8 1158.0,502.8 1153.5,500.8 1152.1,499.6 1149.7,498.5 1148.2,494.9 1147.3,492.9 1141.1,493.7 1133.6,494.1 1132.5,494.1 1124.7,492.9 1119.7,491.7 1118.2,486.2 1112.8,487.8 1108.4,487.4 1105.4,484.6 1102.2,483.0 1100.4,479.1 1098.0,473.9 1095.0,473.1 1093.5,474.7 1092.1,476.7 1093.2,480.6 1094.4,483.8 1097.1,487.4 1098.3,489.7 1100.4,495.3 1101.6,490.1 1102.8,493.3 1102.5,496.1 1105.4,497.7 1111.1,496.9 1113.7,493.3 1116.1,490.5 1117.0,489.0 1117.0,494.5 1117.9,497.3 1123.5,500.0 1127.1,504.4 1123.8,512.3 1121.2,518.3 1117.3,522.2 1113.4,524.2 1109.9,526.2 1104.5,530.1 1098.0,534.1 1093.5,538.1 1087.6,540.4 1083.2,542.8 1078.7,543.2 1077.8,540.8 1076.6,534.5 1076.3,528.6 1072.8,523.0 1069.8,516.3 1065.9,508.4 1063.8,502.4 1060.3,496.5 1057.9,490.5 1054.9,484.6 1052.9,482.2 1053.5,476.7 1051.7,482.6 1051.1,483.8 1049.0,480.6 1046.3,474.7 1045.4,469.6 1049.0,470.3 1051.4,469.6 1052.9,466.8 1053.5,462.8 1054.9,459.3 1055.8,452.9 1057.0,448.6 1054.9,448.6 1052.3,447.8 1049.0,450.5 1046.9,450.9 1044.5,449.0 1040.7,447.4 1039.8,449.8 1035.9,449.8 1033.3,448.2 1030.9,447.0 1030.3,443.4 1029.1,441.4 1028.8,437.9 1027.3,437.1 1027.3,435.1 1031.2,433.5 1035.6,433.5 1038.3,432.3 1035.6,431.1 1035.9,430.3 1042.5,430.7 1045.4,428.4 1048.4,427.2 1054.0,427.2 1057.3,430.0 1060.9,431.1 1063.8,431.5 1068.3,431.1 1072.8,429.2 1073.3,426.4 1071.3,423.2 1068.3,421.6 1063.8,418.1 1061.8,416.5 1058.8,414.5 1058.2,413.7 1062.4,411.3 1063.3,408.2 1066.2,407.0 1062.4,407.0 1060.9,407.4 1057.9,408.6 1054.3,410.2 1053.5,412.5 1057.6,414.1 1054.6,415.3 1051.4,417.3 1049.0,417.7 1046.0,413.7 1049.3,411.3 1046.0,410.9 1043.9,409.0 1040.7,409.4 1039.2,412.1 1037.7,414.5 1034.7,418.5 1034.4,421.6 1032.4,422.4 1031.2,425.2 1032.7,427.2 1033.3,429.2 1035.6,430.3 1035.3,431.1 1032.7,431.1 1030.6,432.3 1028.8,433.5 1027.3,434.7 1026.7,432.7 1026.7,431.9 1023.8,431.5 1022.0,431.5 1020.8,434.3 1019.0,434.3 1017.8,432.7 1016.6,435.1 1017.8,437.9 1017.5,439.5 1020.8,442.2 1020.8,444.2 1019.3,443.0 1017.8,443.4 1018.4,445.4 1017.2,445.0 1018.1,449.0 1016.3,449.0 1015.7,449.4 1013.9,447.8 1012.8,444.2 1013.9,442.2 1012.2,441.8 1011.0,439.9 1009.5,436.7 1008.6,435.5 1007.1,433.5 1007.1,429.6 1006.8,427.6 1004.4,425.6 1003.3,424.8 1000.0,422.8 998.2,421.2 994.6,418.5 993.8,415.3 992.3,414.1 990.8,416.1 989.6,413.3 990.5,412.5 986.3,413.7 986.6,415.7 986.0,418.5 989.6,420.8 991.1,424.4 994.0,427.2 997.6,427.6 997.0,429.6 999.7,430.7 1003.0,432.7 1004.4,434.7 1004.1,435.9 1000.6,433.1 998.8,435.1 998.8,436.7 1000.6,439.1 998.5,441.4 997.3,443.4 996.1,443.4 996.1,442.2 997.6,439.1 995.8,435.1 994.0,434.3 993.5,432.7 991.7,431.9 989.9,430.3 986.9,429.6 985.7,428.0 982.5,425.6 980.7,423.6 980.1,421.2 978.6,418.9 975.9,417.7 973.9,419.7 971.8,420.1 970.0,421.6 967.9,422.8 965.5,422.0 963.8,421.6 961.4,421.2 959.0,422.4 958.7,425.2 959.3,426.0 959.0,427.6 956.0,429.6 952.5,431.1 951.9,432.3 949.5,435.5 948.6,437.5 950.1,439.9 948.0,441.8 947.1,444.2 943.9,447.4 943.0,448.2 939.1,448.2 936.4,448.2 933.5,450.5Z"/>
<path d="M932.6,395.1 939.1,394.3 945.0,392.7 953.7,390.4 951.9,389.6 954.5,384.8 950.4,383.6 949.5,380.8 945.6,376.9 944.7,373.7 942.1,371.7 940.0,371.7 942.1,370.2 944.2,365.8 939.1,365.0 937.6,365.4 940.6,361.4 934.6,361.4 932.3,365.8 932.9,369.8 933.2,373.7 935.2,372.9 934.6,376.5 939.1,376.1 939.7,378.9 940.9,380.5 940.3,382.4 936.1,382.4 936.1,384.4 937.3,386.0 934.1,388.0 937.0,389.2 940.6,390.0 941.5,389.6 937.0,390.7 934.1,393.9Z"/>
<path d="M919.8,389.2 924.3,389.2 930.5,386.8 931.7,382.4 931.1,379.7 933.2,377.7 931.1,374.9 927.2,374.5 924.3,377.3 919.8,378.9 919.8,382.0 922.8,383.2 920.4,386.8 918.9,387.6Z"/>
<path d="M986.3,443.0 995.8,441.8 994.3,447.0 994.3,448.2 986.6,444.6Z"/>
<path d="M973.9,431.1 977.7,430.3 978.6,435.1 977.7,438.7 974.7,439.5 974.4,435.1Z"/>
<path d="M975.0,425.6 977.4,423.2 977.7,427.2 976.8,429.6 975.3,428.4Z"/>
<path d="M1019.3,452.9 1027.6,453.7 1027.3,454.9 1019.6,454.1Z"/>
<path d="M1045.4,454.9 1047.5,453.7 1052.3,452.1 1050.5,454.9 1047.5,456.5Z"/>
<path d="M1187.1,554.7 1190.7,559.8 1192.7,565.0 1191.6,568.6 1188.6,570.1 1186.8,567.8 1186.2,561.0Z"/>
<path d="M1232.5,571.3 1239.1,572.9 1242.6,578.8 1247.7,584.8 1251.8,586.4 1256.9,593.5 1259.9,599.4 1264.3,605.4 1263.7,616.5 1260.2,616.9 1253.9,610.5 1249.5,603.4 1247.4,596.7 1243.5,591.5 1242.0,586.4 1238.2,580.4 1232.8,574.1Z"/>
<path d="M1261.9,620.4 1265.8,617.3 1271.7,619.2 1277.7,620.8 1283.6,620.8 1289.6,624.4 1289.0,627.6 1282.1,626.4 1273.2,624.4 1265.8,622.8Z"/>
<path d="M1273.2,586.4 1277.1,586.8 1280.1,582.8 1285.1,580.8 1288.1,575.3 1292.5,571.7 1296.4,565.8 1299.1,568.9 1303.5,572.9 1300.6,576.5 1298.8,579.6 1300.0,584.8 1302.9,589.5 1299.4,590.7 1298.5,596.7 1295.5,600.6 1294.6,607.4 1290.2,609.7 1285.1,606.6 1281.5,607.0 1276.8,604.6 1276.2,598.6 1273.8,595.5 1273.2,592.3Z"/>
<path d="M1305.3,590.3 1308.3,588.4 1314.8,589.9 1320.8,587.2 1319.3,591.9 1314.8,591.9 1308.9,591.9 1306.5,597.1 1310.4,597.1 1315.7,596.7 1314.2,599.4 1311.2,601.0 1313.3,606.2 1314.8,610.1 1313.3,614.9 1310.7,611.7 1308.9,605.4 1306.8,605.0 1307.1,612.5 1307.1,615.7 1304.4,615.3 1304.4,607.4 1302.3,604.2 1303.8,598.6 1305.3,593.9Z"/>
<path d="M1338.6,596.7 1343.0,595.1 1347.5,596.7 1348.1,602.6 1350.5,606.6 1356.4,601.4 1359.4,600.2 1368.3,603.8 1374.2,607.0 1378.7,608.5 1382.5,614.5 1388.5,617.3 1386.1,620.4 1389.1,625.6 1395.0,633.9 1397.4,635.5 1393.5,634.3 1387.6,633.1 1384.6,628.7 1378.7,624.0 1375.7,626.4 1374.2,629.9 1368.3,629.5 1363.8,625.6 1359.4,626.8 1361.7,621.2 1359.4,615.3 1353.4,611.7 1347.5,608.9 1343.9,609.3 1341.5,605.0 1346.0,603.4 1342.1,602.2 1338.6,599.0Z"/>
<path d="M1390.0,615.3 1395.0,614.1 1399.5,610.1 1401.8,610.5 1400.9,614.5 1396.5,618.1 1392.0,618.1Z"/>
<path d="M1397.4,603.8 1402.4,607.4 1404.2,612.1 1402.7,610.9 1398.0,605.4Z"/>
<path d="M1409.0,615.3 1412.5,619.2 1411.6,620.8 1408.7,616.9Z"/>
<path d="M1414.3,620.0 1417.6,622.8 1417.0,624.0 1414.0,621.2Z"/>
<path d="M1420.2,623.6 1424.1,626.8 1423.5,627.6 1419.9,624.8Z"/>
<path d="M1424.1,630.3 1427.1,632.3 1425.9,633.1 1423.5,631.1Z"/>
<path d="M1428.6,633.9 1431.2,636.3 1429.7,636.3 1428.3,634.7Z"/>
<path d="M1426.5,626.4 1428.3,629.9 1428.9,631.5 1426.5,627.6Z"/>
<path d="M1444.3,651.7 1446.1,653.7 1445.8,655.7 1444.3,654.5Z"/>
<path d="M1446.4,656.9 1447.9,658.4 1447.0,659.2 1446.1,657.7Z"/>
<path d="M1449.1,662.8 1449.9,664.0 1449.1,664.0Z"/>
<path d="M1436.6,673.1 1441.0,676.7 1445.5,681.4 1444.0,682.2 1439.5,679.0 1436.6,674.7Z"/>
<path d="M1476.1,662.4 1479.9,663.2 1479.9,665.2 1476.4,665.6Z"/>
<path d="M1480.2,659.2 1484.1,657.7 1483.5,659.2 1480.8,660.4Z"/>
<path d="M1316.3,634.3 1320.8,629.1 1327.3,626.8 1325.2,629.9 1319.3,633.9Z"/>
<path d="M1291.0,626.0 1296.1,626.4 1295.5,628.7 1291.3,628.0Z"/>
<path d="M1296.4,626.8 1302.9,626.4 1302.9,628.3 1297.0,629.1Z"/>
<path d="M1305.3,626.8 1314.8,626.0 1314.2,628.3 1305.9,628.3Z"/>
<path d="M1302.9,631.1 1308.3,633.1 1305.9,634.3 1302.9,632.3Z"/>
<path d="M1328.2,586.4 1329.7,585.2 1330.3,589.5 1331.7,592.3 1329.7,596.7 1328.8,592.3 1327.9,589.5Z"/>
<path d="M1329.7,605.4 1338.0,606.2 1335.6,607.8 1330.3,607.0Z"/>
<path d="M1324.3,606.2 1327.3,607.0 1326.1,608.5 1324.0,607.8Z"/>
<path d="M1307.7,520.2 1312.4,520.6 1312.7,528.2 1310.7,530.9 1310.9,536.9 1317.8,538.5 1317.8,543.6 1314.2,538.9 1311.2,539.2 1307.7,538.5 1308.6,535.7 1306.5,534.9 1305.6,529.0 1307.1,527.8 1307.1,524.2Z"/>
<path d="M1311.8,565.0 1315.7,559.4 1319.3,559.8 1322.2,554.7 1325.2,562.6 1324.3,568.6 1322.2,570.9 1321.6,566.6 1322.5,565.8 1317.8,568.9 1317.8,564.6 1314.8,563.8Z"/>
<path d="M1318.7,544.0 1322.2,544.0 1322.8,549.9 1320.8,549.1Z"/>
<path d="M1319.0,548.4 1320.8,549.1 1321.3,553.1 1319.9,553.9Z"/>
<path d="M1313.3,551.9 1316.3,550.3 1315.4,557.5 1313.3,555.9Z"/>
<path d="M1311.8,546.8 1314.8,548.0 1313.6,551.9 1311.5,551.5Z"/>
<path d="M1316.0,553.9 1317.8,549.1 1316.9,553.1 1315.7,555.9Z"/>
<path d="M1307.1,540.4 1310.1,540.8 1310.4,544.4 1308.9,545.2Z"/>
<path d="M1297.6,560.6 1301.4,555.9 1305.0,548.8 1303.8,551.5 1300.0,557.9 1297.9,559.0Z"/>
<path d="M1335.0,462.0 1338.6,458.9 1340.9,461.6 1341.5,463.6 1339.8,469.2 1338.0,470.3 1336.2,469.6 1336.5,464.8 1334.7,463.6Z"/>
<path d="M1343.0,460.4 1347.5,457.7 1349.6,459.7 1348.1,461.6 1345.1,462.8 1343.3,463.6Z"/>
<path d="M1338.3,458.9 1343.0,453.3 1347.5,452.5 1353.4,452.1 1355.5,447.8 1357.3,445.0 1356.4,447.8 1360.8,445.4 1363.8,441.4 1365.3,435.9 1365.3,432.7 1368.3,429.2 1369.8,433.1 1371.2,437.1 1369.8,441.8 1368.3,447.0 1367.7,452.1 1365.3,454.9 1364.7,452.9 1361.7,456.5 1360.0,456.5 1356.4,456.5 1356.1,457.7 1352.8,461.2 1350.7,459.3 1351.0,456.5 1347.5,456.1 1344.5,457.7 1342.4,458.1 1338.6,459.3Z"/>
<path d="M1365.3,429.2 1366.2,426.4 1366.8,422.0 1369.5,422.0 1370.3,413.7 1374.2,417.3 1378.1,419.3 1381.0,418.1 1381.6,422.0 1377.2,423.6 1375.1,427.2 1370.6,424.8 1368.3,426.0 1367.4,428.0Z"/>
<path d="M697.3,506.8 703.0,502.4 708.9,501.6 714.9,504.4 720.8,507.6 725.3,511.1 729.1,513.5 726.8,514.7 718.7,515.1 720.8,511.9 716.4,508.4 710.4,506.4 706.0,504.8 701.5,505.6Z"/>
<path d="M728.5,520.6 734.5,521.4 736.6,523.0 741.6,521.0 746.1,521.4 746.6,519.8 742.8,517.1 738.6,514.7 733.3,514.7 731.5,515.5 733.3,518.3 734.5,519.8 728.5,519.8Z"/>
<path d="M716.9,521.0 722.9,521.8 721.4,523.0 717.2,522.2Z"/>
<path d="M749.9,520.6 754.4,521.0 754.1,522.2 749.9,522.2Z"/>
<path d="M716.1,487.8 719.0,488.2 718.4,489.4Z"/>
<path d="M717.2,494.1 718.7,494.9 718.7,498.5 717.5,496.9Z"/>
<path d="M719.6,488.6 720.8,489.4 720.5,490.9Z"/>
<path d="M766.0,551.1 768.3,550.7 768.3,553.5 766.0,553.5Z"/>
<path d="M768.3,797.4 777.2,796.6 777.2,799.4 768.3,800.2Z"/>
<path d="M773.4,404.6 775.8,401.0 779.3,392.7 783.8,389.2 783.2,394.3 786.1,397.5 790.6,398.3 792.1,401.4 793.0,405.4 791.5,408.6 788.5,407.8 785.3,407.8 783.2,405.0 778.1,405.0Z"/>
<path d="M568.2,392.3 577.4,394.7 582.7,401.0 583.0,401.8 578.8,401.0 573.8,397.5 569.9,394.7Z"/>
<path d="M554.5,379.3 558.4,379.7 559.8,385.6 556.0,383.6Z"/>
<path d="M490.6,365.8 497.2,363.8 496.6,366.6 491.5,368.6Z"/>
<path d="M452.6,355.1 457.4,354.7 457.1,356.7 453.5,356.7Z"/>
<path d="M439.6,341.6 448.2,342.8 445.2,344.0 440.1,342.8Z"/>
<path d="M486.2,513.5 489.1,515.5 487.4,518.3 486.2,515.9Z"/>
<path d="M484.1,510.3 486.2,511.1 485.0,511.9Z"/>
<path d="M479.6,508.0 481.1,508.8 480.2,509.5Z"/>
<path d="M475.2,505.6 476.4,506.0 475.8,506.8Z"/>
<path d="M756.5,348.4 747.5,346.0 741.6,344.8 735.7,341.2 728.2,338.1 719.3,338.9 717.8,336.1 729.7,334.1 731.2,330.2 734.2,326.2 728.2,323.0 722.3,319.1 714.9,316.3 707.4,316.7 698.5,316.3 689.6,314.7 683.7,311.5 682.2,306.4 685.2,302.4 694.1,301.3 698.5,303.2 697.0,307.6 701.5,306.4 706.0,301.6 710.4,301.6 717.8,304.4 723.8,305.2 729.7,309.6 738.6,312.3 746.1,315.1 750.5,320.3 759.4,325.0 766.8,329.8 765.4,332.1 759.4,336.1 752.0,331.3 756.5,338.1 757.6,344.0 752.0,343.2 746.1,341.2 753.5,346.8Z"/>
<path d="M649.5,317.9 645.1,321.1 634.7,320.7 625.8,321.8 612.4,322.2 603.5,319.5 600.5,315.5 613.9,315.1 599.0,311.5 597.6,306.4 608.0,303.2 616.9,304.8 628.7,303.6 636.2,305.2 639.1,311.5 648.0,315.1Z"/>
<path d="M584.2,311.9 593.1,310.4 600.5,305.2 605.0,302.4 600.5,299.7 590.1,298.5 581.2,299.3 579.7,302.4 576.8,307.6Z"/>
<path d="M655.5,310.4 661.4,308.4 661.4,302.4 652.5,300.9 646.6,304.4 649.5,308.4Z"/>
<path d="M665.9,308.4 676.3,306.4 680.7,301.3 673.3,299.7 665.9,301.3Z"/>
<path d="M654.0,320.3 664.4,322.2 665.9,318.3 659.9,316.3Z"/>
<path d="M691.7,339.3 695.6,332.9 700.0,332.1 706.0,336.9 711.3,340.9 704.5,341.6 701.5,344.8 695.6,343.2 690.5,341.6Z"/>
<path d="M711.9,297.7 694.1,298.5 677.7,297.7 674.8,293.3 665.9,290.6 682.2,290.2 697.0,293.3 708.9,291.7 713.4,294.5Z"/>
<path d="M711.9,291.4 719.3,285.4 726.8,282.6 732.7,278.7 747.5,274.7 759.4,270.4 766.8,267.2 759.4,264.8 741.6,264.4 720.8,264.8 706.0,266.0 694.1,268.0 682.2,270.8 691.1,274.7 697.0,278.7 692.6,282.6 688.1,285.4 697.0,287.8 706.0,290.6Z"/>
<path d="M688.1,283.0 673.3,279.9 665.9,274.7 676.3,271.9 688.1,275.5 692.6,279.9Z"/>
<path d="M634.7,296.5 622.8,298.1 610.9,297.3 601.1,294.5 605.0,290.6 622.8,290.2 633.2,292.5Z"/>
<path d="M658.4,295.7 646.6,294.5 649.5,290.2 658.4,291.0Z"/>
<path d="M605.0,291.4 587.2,292.5 593.1,287.4 603.5,286.6Z"/>
<path d="M652.5,284.6 640.6,282.6 643.6,279.5 655.5,281.5Z"/>
<path d="M981.6,279.5 991.1,277.1 1000.0,276.7 1011.9,281.5 1005.9,283.8 1004.4,286.6 999.4,290.2 991.1,286.6 989.6,283.8 982.2,281.5Z"/>
<path d="M1004.4,275.5 1017.8,274.7 1029.7,276.3 1022.3,279.5 1008.9,278.7Z"/>
<path d="M1011.9,283.8 1019.3,285.0 1016.3,287.4 1011.9,286.2Z"/>
<path d="M1462.4,729.7 1467.2,733.3 1470.7,738.0 1472.2,742.4 1478.2,742.4 1479.6,742.8 1477.9,748.3 1475.2,749.1 1474.9,753.1 1470.1,758.2 1468.4,757.0 1469.5,753.1 1465.7,749.5 1468.1,747.1 1468.4,741.2 1466.9,737.6 1463.3,732.9Z"/>
<path d="M1462.4,753.9 1467.2,756.7 1466.3,759.4 1463.3,763.8 1462.7,766.9 1458.3,768.9 1456.8,775.3 1452.9,778.0 1449.4,778.0 1444.0,775.7 1444.9,772.5 1449.1,767.7 1455.9,763.4 1458.9,759.0 1460.6,755.1Z"/>
</g>
<g clip-path="url(#c_eurasia)"><path d="M1041.0,317.1 1041.0,260.9 1490.0,260.9 1490.0,415.3 1371.2,415.3 1353.4,427.2 1337.7,426.0 1339.5,421.2 1338.6,415.3 1344.5,415.3 1349.6,402.2 1338.6,404.6 1337.1,399.9 1328.2,396.3 1323.7,385.6 1316.3,381.6 1308.3,382.4 1305.9,389.6 1299.4,397.5 1296.1,396.3 1289.6,394.7 1279.2,398.3 1270.3,397.5 1264.3,394.3 1253.9,393.5 1252.4,390.0 1243.5,387.6 1240.6,393.5 1231.7,395.5 1222.7,392.3 1215.3,397.1 1210.3,398.7 1208.8,398.7 1203.4,397.1 1197.5,391.5 1188.6,391.5 1181.2,382.4 1176.7,378.9 1167.8,379.7 1160.4,378.9 1157.4,374.5 1145.5,376.9 1133.6,379.7 1130.7,385.6 1129.2,391.5 1123.2,391.5 1114.3,392.7 1103.9,389.2 1095.0,393.5 1092.1,396.3 1089.1,401.4 1093.5,404.2 1094.4,408.2 1095.6,410.2 1098.0,419.3 1096.5,427.2 1093.5,427.6 1087.6,428.0 1083.2,424.4 1078.7,424.0 1074.2,422.4 1068.3,421.6 1059.4,418.5 1058.2,413.9 1059.4,410.2 1063.0,407.0 1067.7,404.2 1068.3,397.5 1062.4,395.5 1056.4,394.3 1054.9,390.7 1051.1,386.8 1044.5,386.8 1043.1,383.6 1046.0,380.8 1041.6,375.7 1041.0,372.5 1033.3,371.3 1032.1,367.0 1031.2,364.6 1031.8,359.9 1032.7,357.9 1029.7,355.9 1032.1,353.9 1038.6,348.0 1043.1,344.4 1038.6,340.9 1040.1,336.1 1037.1,330.2 1038.6,325.4 1034.1,322.2 1035.6,319.5Z" fill="#ffff00" stroke="rgba(255,255,255,.55)" stroke-width=".6"/></g>
<g clip-path="url(#c_eurasia)"><path d="M1319.0,435.1 1317.8,450.9 1317.8,474.7 1308.9,496.5 1297.0,506.4 1282.1,511.1 1277.7,516.3 1270.3,514.3 1270.3,508.4 1266.4,506.4 1262.2,501.2 1255.4,504.4 1253.0,504.8 1251.5,509.5 1250.1,508.4 1246.5,507.6 1244.1,505.6 1243.5,501.6 1242.6,498.5 1239.4,498.5 1242.6,491.3 1242.0,484.6 1239.1,481.4 1235.5,477.9 1231.7,477.9 1228.7,482.6 1222.7,483.4 1219.8,482.6 1213.8,484.6 1213.2,482.6 1210.9,483.0 1204.9,482.6 1199.0,479.1 1193.0,473.9 1190.1,473.9 1184.1,470.7 1183.5,469.9 1183.8,464.8 1185.0,458.9 1181.2,452.9 1175.2,449.0 1172.2,447.0 1170.8,446.2 1172.0,441.4 1168.7,440.6 1168.4,437.1 1173.7,433.1 1178.2,431.1 1182.6,429.6 1187.7,426.4 1187.7,423.2 1188.6,416.1 1194.5,414.1 1196.0,406.6 1203.4,407.0 1204.0,401.8 1207.9,399.1 1210.3,398.7 1212.3,402.2 1218.3,406.2 1219.8,414.5 1227.2,415.7 1233.1,418.5 1236.1,424.0 1246.5,424.8 1255.4,427.2 1261.3,428.4 1268.8,425.6 1276.2,424.4 1281.5,420.4 1282.1,415.7 1288.1,415.3 1294.0,412.5 1295.5,409.4 1301.4,408.2 1305.3,408.6 1300.0,403.4 1294.0,403.8 1293.4,401.4 1299.4,397.5 1305.9,389.6 1308.3,382.4 1316.3,381.6 1323.7,385.6 1328.2,396.3 1337.1,399.9 1338.6,404.6 1349.6,402.2 1344.5,415.3 1338.6,415.3 1339.5,421.2 1337.7,426.0 1335.6,423.6 1332.6,427.2 1329.7,427.2 1326.1,428.4 1322.2,431.9Z" fill="#2196f3" stroke="rgba(255,255,255,.55)" stroke-width=".6"/></g>
<g clip-path="url(#c_samerica)"><path d="M796.2,576.5 793.6,583.6 787.6,584.4 783.2,586.0 780.2,585.6 775.8,588.4 771.9,588.0 771.3,582.8 771.9,575.7 770.7,572.9 766.8,576.5 762.4,577.7 757.9,576.9 759.4,584.8 761.2,584.8 755.0,590.3 751.1,588.7 750.5,585.6 742.2,586.8 743.1,591.1 741.6,594.3 743.4,598.3 741.6,610.1 733.3,614.1 730.0,622.4 732.7,629.9 735.1,633.1 739.8,631.1 739.8,637.1 742.8,636.9 746.1,637.5 752.0,632.7 755.6,633.1 756.5,641.0 763.0,645.0 769.8,647.8 770.7,657.7 776.1,658.0 776.6,662.4 778.7,665.6 777.2,671.9 777.8,681.0 783.2,681.8 784.4,687.4 788.2,688.5 787.3,694.9 790.0,697.6 789.7,701.2 784.1,705.6 778.4,713.1 783.2,715.9 786.1,717.4 789.7,721.0 791.5,723.4 790.9,727.0 801.0,736.1 860.4,672.7 860.4,593.5 815.9,569.7 798.0,573.7Z" fill="#ffff00" stroke="rgba(255,255,255,.55)" stroke-width=".6"/></g>
<g clip-path="url(#c_namerica)"><path d="M601.7,464.8 608.8,464.0 619.8,469.6 628.1,469.6 628.1,467.6 633.2,467.6 639.1,476.3 643.0,478.7 645.1,475.5 649.5,476.7 654.0,484.2 655.5,489.0 660.8,490.9 667.3,494.5 673.3,506.4 682.2,502.4 694.1,504.4 694.1,518.3 689.6,522.2 687.2,520.2 684.7,523.0 679.2,523.0 679.2,525.2 681.0,529.7 677.2,529.9 675.7,533.3 675.7,536.1 673.3,542.0 634.7,526.2 599.0,482.6 597.6,464.8Z" fill="#92d050" stroke="rgba(255,255,255,.55)" stroke-width=".6"/></g>
<g clip-path="url(#c_africa)"><path d="M943.0,454.5 943.6,445.0 975.0,443.8 975.0,447.4 973.9,450.9 974.2,456.1 971.8,459.3 976.2,466.4 977.7,473.5 978.9,481.8 978.6,488.6 979.2,496.5 983.7,497.3 985.1,500.4 971.8,510.7 966.7,516.3 962.0,517.9 959.0,515.1 954.8,513.1 953.1,509.9 935.2,494.5 923.7,485.4 923.7,479.8 928.7,476.7 933.8,474.7 938.8,470.7 940.0,468.0 945.9,466.4 944.5,460.8 944.2,456.9Z" fill="#92d050" stroke="rgba(255,255,255,.55)" stroke-width=".6"/></g>
<g clip-path="url(#c_eurasia)"><path d="M1056.4,451.3 1058.5,450.1 1058.2,447.8 1062.4,447.8 1068.3,447.8 1075.4,446.6 1082.6,446.2 1080.8,443.0 1081.4,437.5 1082.6,436.3 1079.3,434.7 1078.7,430.7 1075.7,429.2 1072.8,429.2 1071.3,425.2 1047.5,423.2 1034.1,426.0 1032.7,427.2 1031.2,427.2 1027.9,428.4 1026.7,431.9 1025.8,434.3 1026.1,441.0 1029.7,450.1 1035.6,452.5 1047.5,452.1 1054.9,450.9Z" fill="#92d050" stroke="rgba(255,255,255,.55)" stroke-width=".6"/></g>
<g fill="#ffff00" stroke="rgba(255,255,255,.55)" stroke-width=".4">
<path d="M1008.3,377.9 1017.2,378.1 1016.9,375.7 1012.8,374.5 1011.9,374.5 1008.9,376.7Z"/>
<path d="M1103.0,310.4 1105.4,306.4 1106.9,302.4 1112.8,298.5 1115.8,295.3 1127.7,291.4 1142.5,288.6 1152.9,288.6 1153.8,290.2 1145.5,292.5 1133.6,295.3 1126.2,298.5 1120.3,302.4 1117.3,305.2 1115.8,310.4 1120.6,313.9 1112.8,313.9 1105.4,312.7Z"/>
<path d="M1371.2,378.5 1374.2,383.6 1375.1,389.6 1378.7,399.5 1374.2,405.4 1375.7,410.5 1371.2,411.3 1371.2,403.4 1371.2,393.5 1370.6,385.6Z"/>
<path d="M1379.3,754.7 1384.6,756.3 1390.0,755.5 1390.0,760.6 1387.6,764.6 1384.6,766.2 1381.6,763.8 1380.7,759.8Z"/>
<path d="M1245.9,281.1 1253.9,278.7 1262.8,281.5 1259.9,283.4 1249.5,284.2Z"/>
<path d="M1220.7,274.3 1227.2,271.9 1236.1,271.6 1240.6,273.5 1247.4,277.5 1245.0,279.9 1233.1,280.7 1227.2,278.3Z"/>
<path d="M1356.4,294.5 1371.2,292.5 1383.1,295.3 1374.2,297.3 1359.4,297.7Z"/>
<path d="M1082.6,274.3 1089.1,273.1 1098.0,272.9 1103.0,273.9 1096.5,274.5 1092.1,275.5 1087.6,275.1Z"/>
<path d="M1287.2,683.0 1288.7,679.8 1296.4,675.1 1302.9,672.7 1308.9,671.1 1312.7,665.6 1312.4,661.6 1316.6,662.0 1316.6,657.7 1320.8,654.9 1323.7,649.7 1326.7,648.5 1330.3,652.1 1334.4,652.5 1334.7,648.1 1337.4,642.6 1340.1,641.8 1343.3,641.4 1343.3,638.6 1350.5,641.8 1355.5,641.0 1354.9,645.8 1353.1,648.1 1351.9,652.9 1356.4,656.5 1362.3,660.4 1367.7,662.8 1369.8,654.9 1370.1,645.0 1371.2,637.1 1372.7,635.9 1375.7,644.2 1376.0,650.1 1379.0,650.9 1381.3,653.7 1381.3,658.8 1383.7,664.8 1384.3,668.7 1389.1,672.7 1392.6,676.7 1397.1,682.6 1397.7,687.0 1402.4,691.7 1404.5,696.1 1404.5,702.4 1405.7,706.8 1403.9,716.3 1402.4,722.2 1398.9,727.3 1397.1,732.9 1395.0,739.2 1394.7,742.0 1389.1,743.6 1384.3,748.3 1380.2,745.6 1375.7,747.1 1369.8,745.6 1365.3,742.0 1364.4,738.0 1360.8,734.5 1360.0,729.3 1358.8,725.0 1357.9,727.3 1356.4,732.9 1353.4,732.9 1352.5,731.3 1350.5,726.6 1347.5,723.4 1343.0,720.2 1338.6,718.2 1332.0,719.4 1323.7,721.4 1318.4,724.2 1316.3,727.7 1311.2,727.7 1305.9,727.7 1301.4,731.3 1299.4,732.5 1294.0,731.7 1291.3,729.3 1293.1,723.8 1292.8,718.2 1290.8,711.5 1288.7,704.4 1286.0,697.3 1288.1,695.7 1286.3,690.5 1286.9,686.6Z"/>
<path d="M412.5,320.7 417.9,321.8 423.8,323.0 429.8,326.6 434.2,327.4 440.1,329.0 443.7,331.3 441.6,333.7 437.8,338.1 434.2,338.5 431.2,336.1 428.3,336.9 425.3,333.7 420.8,333.7 416.4,336.1 412.5,334.9Z"/>
<path d="M412.5,310.4 419.4,310.4 421.4,311.9 416.4,312.7 412.5,312.7Z"/>
</g>
<g fill="#2196f3" stroke="rgba(255,255,255,.55)" stroke-width=".4">
<path d="M1310.4,493.3 1311.8,494.5 1310.7,498.5 1308.9,504.0 1308.3,506.8 1306.2,502.4 1306.8,498.5 1308.9,494.5Z"/>
<path d="M1272.3,517.5 1274.7,514.3 1278.3,513.9 1279.2,515.9 1277.1,519.8 1275.0,521.4 1272.3,520.2Z"/>
</g>
<path d="M1095.0,409.4 1101.0,407.4 1106.9,408.2 1106.9,414.1 1101.9,415.3 1101.0,417.7 1098.9,417.3 1101.0,422.4 1105.4,424.4 1106.0,428.8 1109.3,431.1 1106.3,435.1 1109.3,438.3 1108.4,443.0 1109.9,447.0 1103.9,448.2 1098.9,445.4 1095.0,444.6 1094.7,441.4 1095.9,437.9 1098.9,433.9 1096.5,431.1 1093.5,427.6 1090.6,423.2 1090.6,417.3 1088.2,416.9 1090.6,412.9Z" fill="#1b2029" stroke="rgba(255,255,255,.55)" stroke-width=".4"/>
<g fill="none" stroke="rgba(255,255,255,.55)" stroke-width=".6" stroke-linejoin="round">
<path d="M584.8,399.5 666.8,399.5 668.5,400.6 676.3,402.2 683.7,403.4 687.0,402.2 697.6,408.2 701.5,411.3 704.5,414.1 704.8,423.2 702.7,426.8 714.9,424.0 714.3,421.6 722.3,419.3 727.6,415.3 737.1,415.3 740.7,411.7 744.0,405.8 748.1,407.0 748.1,412.5 750.5,415.7"/>
<path d="M530.7,317.9 530.7,354.7 536.7,355.9 541.1,360.3 547.1,357.1 553.0,361.8 558.1,369.4 563.4,371.7 562.8,375.7"/>
<path d="M737.7,546.8 734.2,549.5 732.7,555.9 734.2,560.6 735.1,564.6 740.1,565.8 743.4,569.3 749.0,568.9 748.1,575.7 749.6,580.4 749.9,584.4 751.1,588.7"/>
<path d="M771.3,560.2 769.2,563.8 767.7,567.0 767.4,569.7 769.2,572.9"/>
<path d="M779.9,570.1 779.3,573.7 777.2,577.7 777.8,579.6 781.7,586.0"/>
<path d="M789.1,570.9 787.9,575.7 789.1,579.6 787.6,584.4"/>
<path d="M715.5,588.0 718.7,590.3 722.9,591.9 725.9,593.9 728.8,597.5 732.1,602.6 738.9,602.6 741.6,604.2 740.7,608.5 741.6,610.1"/>
<path d="M711.0,607.0 711.0,610.9 714.9,613.3 716.7,608.5 718.4,605.4 722.0,603.8 725.3,599.4 725.9,593.9"/>
<path d="M742.8,636.9 745.5,643.0 744.6,647.0 744.0,654.1 744.6,657.7 743.1,662.8 740.7,666.0"/>
<path d="M743.1,662.8 745.2,670.7 746.1,674.7 747.8,680.6 749.9,683.8"/>
<path d="M749.9,683.8 752.9,679.8 757.9,681.8 763.3,681.0 765.4,674.7 766.0,671.1 774.0,669.9 777.2,671.9"/>
<path d="M763.3,681.0 768.3,687.4 772.8,690.5 778.1,693.3 775.8,701.2 781.7,701.6 783.8,701.6 787.3,694.9"/>
<path d="M749.9,683.8 746.6,690.5 746.1,698.4 743.1,706.4 741.6,714.3 740.7,722.2 742.2,728.1 740.1,734.1 738.6,742.0 738.0,749.9 736.3,757.8 736.6,765.8 737.1,773.7 735.7,781.6 732.7,789.5 734.2,795.5 737.1,799.4 743.1,799.8 746.4,800.6"/>
<path d="M745.8,802.2 745.8,810.9"/>
<path d="M778.4,713.1 777.2,718.2 776.6,724.2 776.1,728.1"/>
<path d="M684.7,523.0 684.6,530.5 685.5,530.5"/>
<path d="M687.2,531.3 684.6,534.5 684.0,536.5 681.9,538.9"/>
<path d="M684.0,536.5 686.7,538.1 688.7,540.4"/>
<path d="M689.9,542.0 692.0,538.9 695.0,538.1 697.6,534.9 702.4,534.1"/>
<path d="M695.0,549.5 697.9,549.9 700.9,550.3"/>
<path d="M704.2,555.9 703.3,561.4"/>
<path d="M736.3,515.5 736.6,519.1 736.3,522.2"/>
<path d="M910.3,483.8 923.7,483.8"/>
<path d="M923.7,485.4 923.7,490.5 913.9,490.5 913.9,500.4 910.9,502.4 910.9,509.2 899.0,509.2"/>
<path d="M935.2,494.5 930.2,494.9 933.2,532.1 921.9,532.1 917.7,532.5 915.3,531.7 913.3,534.9"/>
<path d="M913.3,534.9 909.4,529.7 906.4,527.8 900.5,530.1"/>
<path d="M913.3,534.9 915.6,544.4 908.8,543.6 899.9,544.8"/>
<path d="M899.6,539.6 905.0,538.9 908.5,540.0 905.0,541.2 899.6,541.6"/>
<path d="M915.6,544.4 922.8,544.4 924.8,549.9 925.7,553.1 926.9,557.9 924.6,563.4 921.6,560.2 918.9,559.8 918.0,555.5 916.2,553.9 912.4,554.3 910.0,557.9"/>
<path d="M918.9,559.8 915.3,566.2"/>
<path d="M924.6,563.4 924.8,568.6 927.2,576.1"/>
<path d="M925.7,553.1 931.1,551.9 933.2,552.3 936.1,555.1 941.2,555.9 941.2,565.8 940.3,573.3"/>
<path d="M933.2,552.3 934.1,546.8 936.7,543.2 939.1,540.8 943.6,537.3 948.0,534.1 950.1,534.1"/>
<path d="M941.2,555.9 941.2,549.9 949.5,549.9 952.2,549.9 956.6,544.8 952.5,540.4 950.1,534.1"/>
<path d="M949.5,549.9 951.0,559.8 951.3,565.8 953.1,569.3"/>
<path d="M952.2,549.9 954.3,557.9 954.3,568.9"/>
<path d="M956.6,544.8 960.2,547.2 960.8,553.9 957.5,562.6 957.5,568.2"/>
<path d="M960.2,547.2 961.4,540.0 965.8,538.5 970.3,542.0 976.2,542.8 982.2,540.4 989.9,539.2"/>
<path d="M962.0,517.9 962.0,526.6 960.2,532.5 953.4,532.9 950.1,534.1"/>
<path d="M985.1,500.4 991.7,504.0 994.0,502.4 995.5,510.3 995.8,526.2 992.3,531.3 989.9,539.2"/>
<path d="M994.0,502.4 1020.8,516.3 1020.8,514.3 1023.8,514.3 1023.8,506.4 1023.8,468.4"/>
<path d="M1023.8,506.4 1059.1,506.4"/>
<path d="M1020.8,516.3 1020.8,531.3 1016.3,538.1 1014.8,543.2 1017.5,549.9"/>
<path d="M989.9,539.2 991.7,544.0 992.9,546.0 994.0,553.9 991.1,554.7 995.5,554.3 994.9,563.8"/>
<path d="M994.9,563.8 1000.0,563.4 1005.9,557.9 1011.9,554.7 1017.5,549.9"/>
<path d="M991.7,544.0 988.7,553.9 985.1,562.6 980.7,566.2 976.2,573.7 974.7,575.7"/>
<path d="M994.9,563.8 992.6,570.1 994.0,575.7 997.0,584.8"/>
<path d="M978.6,584.4 983.1,584.8 989.0,584.8 997.0,584.8"/>
<path d="M978.6,589.5 983.1,589.5 983.1,584.8"/>
<path d="M989.0,584.8 992.3,588.4 992.6,595.5 991.1,602.6 986.6,602.6 984.0,604.6 982.5,608.9"/>
<path d="M1004.7,579.6 1003.0,585.6 1002.4,595.5 997.6,602.2 997.0,607.4 994.6,610.5 992.3,612.9 988.4,611.7 985.7,616.5"/>
<path d="M997.0,584.8 998.5,580.8 1004.7,579.6 1004.7,576.1 1016.3,577.3 1022.3,573.7 1030.9,573.3"/>
<path d="M1017.5,549.9 1020.2,559.0 1021.4,560.6 1024.6,564.6 1028.2,569.7 1030.9,573.3"/>
<path d="M1021.4,559.0 1023.8,552.7 1032.4,555.5 1035.6,555.1 1038.6,552.7 1044.5,546.0 1048.1,545.2 1047.8,551.1 1050.8,555.9"/>
<path d="M1050.8,555.9 1051.4,551.5 1054.0,546.0 1056.7,543.2 1057.9,536.9 1059.4,526.2 1064.1,522.2"/>
<path d="M1057.9,536.9 1062.4,535.7 1068.3,536.1 1075.4,544.0 1073.6,549.9 1076.9,550.3 1078.1,548.0"/>
<path d="M1076.9,550.3 1077.2,555.5 1080.2,557.9 1089.1,561.8 1092.1,561.8 1083.2,573.7 1074.2,576.9 1071.3,578.1"/>
<path d="M1071.3,578.1 1066.8,579.6 1062.4,579.2 1056.4,576.1 1053.5,573.7 1050.5,576.9 1053.5,586.8 1050.5,593.5 1050.5,597.5"/>
<path d="M1053.5,571.7 1047.5,562.6 1050.8,555.9"/>
<path d="M1071.3,578.1 1071.3,593.5 1072.8,600.2"/>
<path d="M1050.5,597.5 1061.5,605.8 1065.9,612.1"/>
<path d="M1030.9,573.3 1037.1,575.7 1041.0,579.6 1050.5,576.9"/>
<path d="M1041.0,579.6 1042.2,584.8 1037.7,590.7 1037.4,599.0 1035.6,604.2 1036.8,610.9 1040.7,626.0"/>
<path d="M1037.4,599.0 1040.1,597.5 1050.5,597.5"/>
<path d="M1040.1,597.5 1041.0,603.0 1039.8,605.4 1040.7,606.6 1036.8,610.9"/>
<path d="M1035.6,604.2 1040.1,603.0"/>
<path d="M1040.7,626.0 1035.3,627.2 1033.8,630.3 1034.7,635.9 1033.8,640.2 1038.0,641.8 1038.0,646.6 1035.6,646.6 1030.3,640.2 1024.6,637.9 1020.8,637.1 1020.8,645.0"/>
<path d="M986.0,617.3 988.1,616.9 998.8,616.9 1000.0,623.2 1007.4,623.2 1010.4,621.2 1014.2,622.4 1014.2,631.1 1014.8,637.1 1020.8,637.1"/>
<path d="M1020.8,645.0 1014.8,645.0 1014.8,657.7 1019.0,663.2"/>
<path d="M984.5,661.6 991.1,662.4 1004.1,662.4 1013.1,664.8 1019.0,663.2 1024.6,664.0"/>
<path d="M1011.9,666.0 1011.9,680.6 1008.9,680.6 1008.9,691.7 1008.9,706.0 1005.9,707.9 1001.5,707.2 998.5,706.8"/>
<path d="M1008.9,691.7 1011.3,699.6 1016.3,697.3 1017.8,693.7 1025.2,695.3 1029.1,689.7 1036.8,681.4"/>
<path d="M1036.8,681.4 1031.8,674.7 1026.7,668.7 1024.6,664.0"/>
<path d="M1011.9,666.0 1019.3,666.8 1024.6,664.0"/>
<path d="M1024.6,664.0 1029.7,664.4 1035.3,656.9 1039.8,655.3"/>
<path d="M1039.8,655.3 1039.2,652.1 1047.5,648.9 1047.2,645.0 1047.5,639.0 1047.5,631.1 1040.7,626.0"/>
<path d="M1047.5,631.1 1050.5,631.1 1053.2,639.0 1060.9,639.8 1069.5,635.1"/>
<path d="M1053.2,639.0 1052.3,647.0 1056.1,651.3 1055.8,656.9 1054.3,661.2 1051.4,656.9 1051.7,650.9 1047.5,648.9"/>
<path d="M1039.8,655.3 1042.5,656.9 1047.2,659.6 1046.6,666.8 1047.5,671.9 1045.7,677.8 1042.5,682.2"/>
<path d="M1036.8,681.4 1042.5,682.2 1044.5,690.5 1044.2,696.1 1044.8,699.6 1047.2,700.0"/>
<path d="M1041.0,697.6 1042.8,695.3 1044.5,696.5 1044.8,699.6 1042.5,701.6 1041.0,697.6"/>
<path d="M1029.7,710.7 1034.4,706.8 1036.8,709.9 1033.3,714.7 1029.7,710.7"/>
<path d="M1051.1,469.6 1053.2,476.7"/>
<path d="M975.0,447.4 973.9,450.9 974.2,456.1 971.8,459.3 976.2,466.4 977.7,473.5"/>
<path d="M977.7,473.5 980.1,467.6 983.7,462.4"/>
<path d="M923.1,427.6 929.9,427.6 931.1,428.8 929.0,431.1 929.3,433.9 928.7,436.3 927.2,436.7 928.7,439.9 927.8,441.4 928.7,443.0 927.2,445.0 927.5,446.2"/>
<path d="M944.2,421.6 951.6,424.0 954.5,425.2 958.7,425.6"/>
<path d="M971.8,420.1 970.3,418.5 970.0,414.9 970.3,411.7 967.6,410.5 967.6,409.0 970.3,405.4 972.1,405.0 973.9,399.5 968.5,397.5 967.3,397.5 963.8,395.5 962.0,394.3 956.9,391.1"/>
<path d="M959.6,390.0 964.4,389.6 967.0,391.5 967.3,392.3 968.5,394.3 967.6,395.1 968.5,397.5"/>
<path d="M967.3,392.3 967.3,388.4 970.3,386.8 970.9,382.8"/>
<path d="M975.0,376.1 978.9,376.5"/>
<path d="M991.7,380.1 992.9,385.2 993.2,389.6 994.0,391.5 992.0,391.9 986.0,394.3 987.5,398.3 990.5,400.3 988.1,405.4 985.1,405.0 980.7,405.4 978.0,405.4 974.7,404.6 972.1,405.0"/>
<path d="M970.3,411.7 974.4,409.8 976.2,411.7 979.5,409.4 980.7,407.8 978.0,407.0 978.0,405.4"/>
<path d="M980.7,407.8 985.7,407.4 986.3,408.6 990.2,409.4 997.3,408.2 998.5,405.4 1000.3,403.4 999.7,401.0 994.0,399.5 990.5,400.3"/>
<path d="M994.0,391.5 997.9,393.5 1002.1,394.3 1005.3,397.5 1000.6,399.9 999.7,401.0"/>
<path d="M1005.3,397.5 1008.9,398.7 1016.3,399.1 1020.8,393.1 1019.6,389.6 1019.3,385.6 1020.5,380.1 1019.3,379.7 1017.2,378.1 1008.3,378.1"/>
<path d="M1017.2,378.1 1016.9,375.7 1012.8,374.5"/>
<path d="M1019.3,379.7 1025.2,378.9 1028.5,374.5 1028.5,372.9 1033.3,371.3"/>
<path d="M1012.2,371.3 1020.8,370.6 1028.5,372.9"/>
<path d="M1021.7,364.2 1026.7,364.6 1031.2,365.8"/>
<path d="M1019.6,389.6 1029.7,389.6 1040.1,390.4 1043.9,387.2"/>
<path d="M1016.3,399.1 1015.4,401.8 1017.5,403.4 1023.5,404.6 1028.5,402.2 1032.7,402.2 1036.2,405.4 1038.6,409.8"/>
<path d="M1028.5,402.2 1033.3,409.4 1033.3,413.3 1037.7,414.5"/>
<path d="M1000.3,403.4 1005.3,404.2 1010.4,401.4 1015.4,401.8"/>
<path d="M1017.5,403.4 1011.9,410.5 1009.8,410.9 1005.3,411.7 1000.0,411.3 998.2,409.4 997.3,408.2"/>
<path d="M1009.8,410.9 1013.4,416.1 1016.3,416.5 1016.9,418.5 1017.8,420.1 1025.2,420.4 1029.7,418.9 1034.4,420.4"/>
<path d="M1016.9,418.5 1016.0,422.4 1016.0,426.0 1017.8,430.0 1022.3,429.2 1027.6,428.4"/>
<path d="M1017.8,430.0 1011.9,431.5 1010.4,435.1 1008.9,436.3"/>
<path d="M1011.9,431.5 1010.7,427.6 1009.2,424.8 1007.1,427.6"/>
<path d="M1016.0,426.0 1010.7,427.6"/>
<path d="M1009.2,424.8 1006.5,421.2 1007.1,418.1 1005.9,415.7 1005.3,411.7"/>
<path d="M1005.9,415.7 999.7,414.5 996.4,414.5 997.6,418.5 1001.8,423.2 1004.1,425.2"/>
<path d="M1006.5,421.2 1004.4,425.2"/>
<path d="M989.9,413.3 994.9,413.3 996.1,410.5 998.2,409.4"/>
<path d="M982.8,359.9 985.1,353.9 986.0,350.0 985.1,342.0 991.1,338.1 994.0,331.3 998.5,325.8 1003.0,322.2 1010.4,320.3 1019.3,324.6 1019.9,330.2 1021.1,332.9"/>
<path d="M1010.4,320.3 1014.8,321.4 1019.3,321.4 1025.8,319.1 1028.2,316.3 1032.7,316.3 1035.6,319.5"/>
<path d="M927.8,375.7 925.7,377.7 927.8,379.3 930.8,379.3"/>
<path d="M1078.7,430.7 1083.2,430.0 1087.6,428.0"/>
<path d="M1082.6,436.3 1087.6,439.5 1092.1,437.1 1094.7,441.4"/>
<path d="M1083.2,430.0 1087.6,437.1 1087.6,439.5"/>
<path d="M1075.4,446.6 1071.9,455.7 1064.7,461.2 1056.4,464.0 1056.1,460.8 1058.2,458.1 1056.4,456.5"/>
<path d="M1055.2,464.0 1054.9,468.8 1053.5,476.7 1056.4,477.9 1060.9,474.7 1059.4,468.8 1065.9,466.0 1064.7,461.2"/>
<path d="M1053.7,462.4 1055.2,462.0 1055.2,464.0"/>
<path d="M1065.9,466.0 1074.2,470.7 1082.3,477.9 1087.6,478.3 1090.3,474.3 1092.1,474.7"/>
<path d="M1087.6,478.3 1091.2,480.6 1093.2,480.6"/>
<path d="M1082.6,446.2 1084.6,451.3 1086.1,454.9 1084.6,458.9 1086.1,462.8 1090.6,466.0 1091.2,470.7 1093.5,474.7"/>
<path d="M1109.6,445.8 1115.8,442.6 1123.2,444.6 1127.7,448.6 1131.3,448.6 1129.5,457.7 1130.1,468.8 1133.0,469.6 1130.4,475.5 1135.1,477.1 1137.2,485.8 1132.5,493.7"/>
<path d="M1130.4,475.5 1139.6,476.7 1146.4,475.1 1147.6,469.9 1155.3,467.2 1155.9,462.4 1158.3,461.6 1160.7,457.7 1161.9,452.9 1161.9,449.8 1169.3,447.4 1172.0,446.2"/>
<path d="M1131.3,452.5 1135.1,453.7 1141.1,449.8 1147.0,445.4 1151.5,447.0 1155.9,444.6 1160.4,441.0 1162.2,448.2 1167.8,445.4 1172.0,446.2"/>
<path d="M1147.0,445.4 1139.6,439.1 1133.6,433.1 1130.7,430.0 1127.7,426.4 1123.2,424.4 1118.8,430.0 1115.8,430.0 1112.8,430.0 1112.3,427.2 1105.4,428.0"/>
<path d="M1115.8,430.0 1115.8,415.3 1123.5,412.9 1130.7,418.1 1133.6,421.2 1142.3,420.4 1145.5,427.2 1147.0,430.3 1151.5,431.1 1154.4,429.6 1160.1,426.4 1167.8,423.2 1173.7,424.0 1187.7,426.4"/>
<path d="M1160.1,426.4 1158.9,429.6 1163.3,433.1 1168.4,437.1"/>
<path d="M1151.5,447.0 1152.4,442.2 1150.9,436.7 1158.9,434.3 1158.9,429.6"/>
<path d="M1158.9,434.3 1163.3,437.5 1168.4,437.1"/>
<path d="M1152.1,499.6 1160.4,496.9 1158.3,484.6 1164.8,478.7 1170.8,470.7 1170.8,463.6 1169.3,456.9 1178.2,453.3"/>
<path d="M1187.4,479.5 1196.9,485.0 1204.3,488.2 1211.2,489.0 1211.2,483.0"/>
<path d="M1190.1,473.9 1187.4,479.5"/>
<path d="M1213.2,508.0 1213.5,497.3 1211.2,494.9 1213.2,489.0 1216.2,490.9 1216.5,493.7 1223.9,494.5 1222.7,497.3 1220.4,500.4 1223.6,502.0 1224.5,509.2"/>
<path d="M1213.5,485.4 1216.2,487.8 1222.7,487.4 1222.7,483.4"/>
<path d="M1224.5,509.2 1226.3,505.6 1226.9,498.5 1230.8,493.7 1232.2,487.8 1237.6,485.8 1238.8,481.8"/>
<path d="M1246.8,513.1 1243.2,515.5 1240.0,522.2 1243.2,528.6 1241.2,533.3 1244.1,540.0 1245.3,547.6 1242.6,553.1"/>
<path d="M1246.8,513.1 1250.1,508.4"/>
<path d="M1246.8,513.1 1248.0,516.3 1250.1,516.3 1249.5,523.0 1252.7,521.4 1258.4,521.0 1260.8,525.0 1260.8,529.0 1263.1,532.1 1262.8,536.5 1255.4,536.9 1253.9,539.6 1255.1,547.2"/>
<path d="M1253.0,504.8 1255.4,510.3 1259.9,512.7 1258.4,516.7 1261.9,520.2 1267.3,528.2 1268.8,533.3 1268.8,535.3 1262.8,536.5"/>
<path d="M1268.8,535.3 1268.8,544.0 1264.3,549.1 1261.3,550.3 1259.9,552.3"/>
<path d="M1246.8,567.8 1249.5,570.5 1252.7,568.9"/>
<path d="M1275.0,585.6 1277.7,589.9 1282.1,588.0 1288.1,587.6 1291.0,582.4 1292.8,576.9 1298.8,576.9"/>
<path d="M1368.3,603.8 1368.3,629.5"/>
<path d="M1320.8,629.1 1321.0,631.1"/>
<path d="M1325.8,443.8 1330.8,440.6"/>
<path d="M1076.6,528.6 1078.7,524.6 1083.7,524.6 1089.1,526.2 1094.4,520.6 1103.9,518.3 1112.8,514.3 1114.9,506.4 1113.4,503.6 1105.7,502.8 1102.8,498.1 1102.8,497.3"/>
<path d="M1103.9,518.3 1107.2,527.8"/>
<path d="M1113.4,503.6 1115.2,497.7 1117.0,494.9"/>
<path d="M1100.4,495.7 1102.5,496.5"/>
<path d="M1337.7,426.0 1335.6,423.6 1332.6,427.2 1329.7,427.2 1326.1,428.4 1322.2,431.9 1319.0,435.1"/>
</g>
<g fill="#fff" text-anchor="middle">
<text x="825.4" y="298.8" font-size="8.5">格陵兰</text>
<text x="893.0" y="337.3" font-size="8.5">冰岛</text>
<text x="646.6" y="366.3" font-size="8.5">加拿大</text>
<text x="653.8" y="438.7" font-size="9">UnitedStatesofAmerica</text>
<text x="756.2" y="466.9" font-size="8.5">百慕大</text>
<text x="643.1" y="499.8" font-size="8.5">墨西哥</text>
<text x="716.7" y="498.1" font-size="9">TheBahamas</text>
<text x="713.2" y="509.1" font-size="8.5">古巴</text>
<text x="739.0" y="520.2" font-size="9">DominicanRepublic</text>
<text x="679.5" y="533.3" font-size="8.5">危地马拉</text>
<text x="695.5" y="544.3" font-size="8.5">尼加拉瓜</text>
<text x="710.0" y="561.5" font-size="8.5">巴拿马</text>
<text x="766.8" y="554.4" font-size="9">TrinidadandTobago</text>
<text x="751.7" y="567.2" font-size="8.5">委内瑞拉</text>
<text x="773.9" y="576.6" font-size="8.5">圭亚那</text>
<text x="731.5" y="580.6" font-size="8.5">哥伦比亚</text>
<text x="715.0" y="601.5" font-size="8.5">厄瓜多尔</text>
<text x="727.5" y="631.8" font-size="8.5">秘鲁</text>
<text x="791.4" y="637.8" font-size="8.5">巴西</text>
<text x="756.7" y="662.0" font-size="8.5">玻利维亚</text>
<text x="774.5" y="687.3" font-size="8.5">巴拉圭</text>
<text x="782.3" y="725.3" font-size="8.5">乌拉圭</text>
<text x="755.0" y="734.7" font-size="8.5">阿根廷</text>
<text x="735.2" y="743.1" font-size="8.5">智利</text>
<text x="772.2" y="800.6" font-size="9">FalklandIslands</text>
<text x="1156.0" y="791.1" font-size="9">FrenchSouthernandAntarcticLands</text>
<text x="937.8" y="434.7" font-size="8.5">西班牙</text>
<text x="977.0" y="459.1" font-size="8.5">突尼斯</text>
<text x="956.4" y="484.2" font-size="8.5">阿尔及利亚</text>
<text x="1002.8" y="488.5" font-size="8.5">利比亚</text>
<text x="1037.5" y="490.1" font-size="8.5">埃及</text>
<text x="912.3" y="499.6" font-size="9">WesternSahara</text>
<text x="918.2" y="514.6" font-size="8.5">毛里塔尼亚</text>
<text x="938.4" y="527.0" font-size="8.5">马里</text>
<text x="976.7" y="526.7" font-size="8.5">尼日尔</text>
<text x="1004.4" y="534.9" font-size="8.5">乍得</text>
<text x="1037.5" y="531.9" font-size="8.5">苏丹</text>
<text x="903.1" y="541.4" font-size="8.5">冈比亚</text>
<text x="943.3" y="547.0" font-size="9">BurkinaFaso</text>
<text x="972.7" y="557.7" font-size="8.5">尼日利亚</text>
<text x="931.9" y="565.9" font-size="9">IvoryCoast</text>
<text x="1009.3" y="569.5" font-size="9">CentralAfricanRepublic</text>
<text x="1075.7" y="548.6" font-size="8.5">吉布提</text>
<text x="1066.9" y="561.3" font-size="8.5">埃塞俄比亚</text>
<text x="1084.8" y="576.0" font-size="8.5">索马里</text>
<text x="979.6" y="589.1" font-size="9">EquatorialGuinea</text>
<text x="983.5" y="597.3" font-size="8.5">加蓬</text>
<text x="1061.6" y="592.4" font-size="8.5">肯尼亚</text>
<text x="1019.2" y="606.8" font-size="9">DemocraticRepublicoftheCongo</text>
<text x="1052.2" y="619.8" font-size="9">UnitedRepublicofTanzania</text>
<text x="1000.5" y="644.3" font-size="8.5">安哥拉</text>
<text x="1030.9" y="647.9" font-size="8.5">赞比亚</text>
<text x="1055.1" y="663.9" font-size="8.5">莫桑比克</text>
<text x="1087.8" y="672.1" font-size="8.5">马达加斯加</text>
<text x="999.9" y="683.2" font-size="8.5">纳米比亚</text>
<text x="1042.4" y="700.9" font-size="8.5">斯威士兰</text>
<text x="1023.4" y="710.7" font-size="9">SouthAfrica</text>
<text x="1054.2" y="439.9" font-size="8.5">土耳其</text>
<text x="1048.9" y="455.1" font-size="9">NorthernCyprus</text>
<text x="1053.0" y="470.2" font-size="8.5">以色列</text>
<text x="1079.3" y="463.9" font-size="8.5">伊拉克</text>
<text x="1110.3" y="466.1" font-size="8.5">伊朗</text>
<text x="1090.0" y="478.8" font-size="8.5">科威特</text>
<text x="1081.2" y="499.9" font-size="9">SaudiArabia</text>
<text x="1115.7" y="513.6" font-size="8.5">阿曼</text>
<text x="1090.6" y="532.1" font-size="8.5">也门</text>
<text x="1145.6" y="460.9" font-size="8.5">阿富汗</text>
<text x="1155.6" y="476.1" font-size="8.5">巴基斯坦</text>
<text x="1015.7" y="438.1" font-size="8.5">希腊</text>
<text x="1023.6" y="426.1" font-size="8.5">保加利亚</text>
<text x="1077.7" y="427.4" font-size="8.5">格鲁吉亚</text>
<text x="1125.5" y="439.8" font-size="8.5">土库曼斯坦</text>
<text x="1137.3" y="429.1" font-size="8.5">乌兹别克斯坦</text>
<text x="991.5" y="339.4" font-size="8.5">挪威</text>
<text x="1027.1" y="339.4" font-size="8.5">芬兰</text>
<text x="977.1" y="371.9" font-size="8.5">丹麦</text>
<text x="1022.7" y="370.0" font-size="8.5">拉脱维亚</text>
<text x="941.2" y="381.4" font-size="9">UnitedKingdom</text>
<text x="1031.9" y="382.5" font-size="8.5">白俄罗斯</text>
<text x="979.4" y="392.3" font-size="8.5">德国</text>
<text x="1006.0" y="388.5" font-size="8.5">波兰</text>
<text x="1042.5" y="400.8" font-size="8.5">乌克兰</text>
<text x="956.0" y="410.4" font-size="8.5">法国</text>
<text x="990.6" y="406.2" font-size="8.5">奥地利</text>
<text x="1023.3" y="413.3" font-size="8.5">罗马尼亚</text>
<text x="985.4" y="423.5" font-size="8.5">意大利</text>
<text x="1149.3" y="404.3" font-size="8.5">哈萨克斯坦</text>
<text x="1255.0" y="409.4" font-size="8.5">蒙古</text>
<text x="1258.0" y="450.1" font-size="8.5">中国</text>
<text x="1327.5" y="436.4" font-size="9">NorthKorea</text>
<text x="1355.8" y="451.9" font-size="8.5">日本</text>
<text x="1199.5" y="482.6" font-size="8.5">尼泊尔</text>
<text x="1185.0" y="504.9" font-size="8.5">印度</text>
<text x="1218.0" y="499.9" font-size="8.5">孟加拉国</text>
<text x="1236.3" y="511.4" font-size="8.5">缅甸</text>
<text x="1258.0" y="521.9" font-size="8.5">老挝</text>
<text x="1249.5" y="534.9" font-size="8.5">泰国</text>
<text x="1261.3" y="545.6" font-size="8.5">柬埔寨</text>
<text x="1310.5" y="532.6" font-size="8.5">菲律宾</text>
<text x="1189.3" y="564.9" font-size="9">SriLanka</text>
<text x="1290.3" y="581.4" font-size="8.5">马来西亚</text>
<text x="1309.8" y="603.8" font-size="8.5">印尼</text>
<text x="1323.8" y="630.5" font-size="9">EastTimor</text>
<text x="1378.5" y="622.3" font-size="9">PapuaNewGuinea</text>
<text x="1446.4" y="655.2" font-size="8.5">瓦努阿图</text>
<text x="1478.7" y="666.0" font-size="8.5">斐济</text>
<text x="1441.8" y="680.2" font-size="9">NewCaledonia</text>
<text x="1348.9" y="696.4" font-size="8.5">澳大利亚</text>
<text x="1471.9" y="748.3" font-size="9">NewZealand</text>
<text x="1244.5" y="350.1" font-size="8.5">俄罗斯</text>
</g>
</g></svg>
<!-- selection frame -->
<div class="a" style="left:280px;top:158.800px;width:1340px;height:1.900px;background:#1a7ee0"></div>
<div class="a" style="left:280px;top:913.800px;width:1340px;height:2.200px;background:#4b80b2"></div>
<svg style="left:0;top:0" width="1920" height="1040"><g fill="#fff" stroke="#1a8cff" stroke-width="1.600"><circle cx="279.500" cy="159.500" r="4"/><circle cx="949" cy="159.500" r="4"/><circle cx="1619.500" cy="159.500" r="4"/><circle cx="279.500" cy="537.500" r="4"/><circle cx="1619.500" cy="537.500" r="4"/><circle cx="279.500" cy="915.400" r="4"/><circle cx="949" cy="915.400" r="4"/><circle cx="1619.500" cy="915.400" r="4"/></g></svg>
<div class="a" style="left:280px;top:160.700px;width:1340px;height:1.400px;background:#7c7f84"></div>
<div class="a" style="left:944px;top:914.300px;width:10px;height:1.300px;background:#c4c4c4"></div>
<!-- cover left of ruler line for handles -->
<div class="a" style="left:255px;top:100px;width:24px;height:900px;background:#1b1c1e"></div>
<svg style="left:0;top:0" width="1920" height="1040" font-family="Liberation Sans, sans-serif"><rect x="255" y="98.7" width="5" height="1" fill="#646668"/>
<rect x="255" y="105.7" width="5" height="1" fill="#646668"/>
<rect x="255" y="112.6" width="5" height="1" fill="#646668"/>
<rect x="255" y="119.6" width="5" height="1" fill="#646668"/>
<rect x="255" y="126.1" width="6" height="2" fill="#858585"/>
<rect x="255" y="133.6" width="5" height="1" fill="#646668"/>
<rect x="255" y="140.6" width="5" height="1" fill="#646668"/>
<rect x="255" y="147.5" width="5" height="1" fill="#646668"/>
<rect x="255" y="154.5" width="5" height="1" fill="#646668"/>
<rect x="255" y="161.0" width="6" height="2" fill="#858585"/>
<rect x="255" y="168.5" width="5" height="1" fill="#646668"/>
<rect x="255" y="175.5" width="5" height="1" fill="#646668"/>
<rect x="255" y="182.4" width="5" height="1" fill="#646668"/>
<rect x="255" y="189.4" width="5" height="1" fill="#646668"/>
<rect x="255" y="195.9" width="6" height="2" fill="#858585"/>
<rect x="255" y="203.4" width="5" height="1" fill="#646668"/>
<rect x="255" y="210.4" width="5" height="1" fill="#646668"/>
<rect x="255" y="217.3" width="5" height="1" fill="#646668"/>
<rect x="255" y="224.3" width="5" height="1" fill="#646668"/>
<rect x="255" y="230.8" width="6" height="2" fill="#858585"/>
<rect x="255" y="238.3" width="5" height="1" fill="#646668"/>
<rect x="255" y="245.2" width="5" height="1" fill="#646668"/>
<rect x="255" y="252.2" width="5" height="1" fill="#646668"/>
<rect x="255" y="259.2" width="5" height="1" fill="#646668"/>
<rect x="255" y="265.7" width="6" height="2" fill="#858585"/>
<rect x="255" y="273.2" width="5" height="1" fill="#646668"/>
<rect x="255" y="280.1" width="5" height="1" fill="#646668"/>
<rect x="255" y="287.1" width="5" height="1" fill="#646668"/>
<rect x="255" y="294.1" width="5" height="1" fill="#646668"/>
<rect x="255" y="300.6" width="6" height="2" fill="#858585"/>
<rect x="255" y="308.1" width="5" height="1" fill="#646668"/>
<rect x="255" y="315.0" width="5" height="1" fill="#646668"/>
<rect x="255" y="322.0" width="5" height="1" fill="#646668"/>
<rect x="255" y="329.0" width="5" height="1" fill="#646668"/>
<rect x="255" y="335.5" width="6" height="2" fill="#858585"/>
<rect x="255" y="343.0" width="5" height="1" fill="#646668"/>
<rect x="255" y="349.9" width="5" height="1" fill="#646668"/>
<rect x="255" y="356.9" width="5" height="1" fill="#646668"/>
<rect x="255" y="363.9" width="5" height="1" fill="#646668"/>
<rect x="255" y="370.4" width="6" height="2" fill="#858585"/>
<rect x="255" y="377.8" width="5" height="1" fill="#646668"/>
<rect x="255" y="384.8" width="5" height="1" fill="#646668"/>
<rect x="255" y="391.8" width="5" height="1" fill="#646668"/>
<rect x="255" y="398.8" width="5" height="1" fill="#646668"/>
<rect x="255" y="405.3" width="6" height="2" fill="#858585"/>
<rect x="255" y="412.7" width="5" height="1" fill="#646668"/>
<rect x="255" y="419.7" width="5" height="1" fill="#646668"/>
<rect x="255" y="426.7" width="5" height="1" fill="#646668"/>
<rect x="255" y="433.7" width="5" height="1" fill="#646668"/>
<rect x="255" y="440.2" width="6" height="2" fill="#858585"/>
<rect x="255" y="447.6" width="5" height="1" fill="#646668"/>
<rect x="255" y="454.6" width="5" height="1" fill="#646668"/>
<rect x="255" y="461.6" width="5" height="1" fill="#646668"/>
<rect x="255" y="468.6" width="5" height="1" fill="#646668"/>
<rect x="255" y="475.1" width="6" height="2" fill="#858585"/>
<rect x="255" y="482.5" width="5" height="1" fill="#646668"/>
<rect x="255" y="489.5" width="5" height="1" fill="#646668"/>
<rect x="255" y="496.5" width="5" height="1" fill="#646668"/>
<rect x="255" y="503.5" width="5" height="1" fill="#646668"/>
<rect x="255" y="509.9" width="6" height="2" fill="#858585"/>
<rect x="255" y="517.4" width="5" height="1" fill="#646668"/>
<rect x="255" y="524.4" width="5" height="1" fill="#646668"/>
<rect x="255" y="531.4" width="5" height="1" fill="#646668"/>
<rect x="255" y="538.4" width="5" height="1" fill="#646668"/>
<rect x="255" y="544.8" width="6" height="2" fill="#858585"/>
<rect x="255" y="552.3" width="5" height="1" fill="#646668"/>
<rect x="255" y="559.3" width="5" height="1" fill="#646668"/>
<rect x="255" y="566.3" width="5" height="1" fill="#646668"/>
<rect x="255" y="573.3" width="5" height="1" fill="#646668"/>
<rect x="255" y="579.7" width="6" height="2" fill="#858585"/>
<rect x="255" y="587.2" width="5" height="1" fill="#646668"/>
<rect x="255" y="594.2" width="5" height="1" fill="#646668"/>
<rect x="255" y="601.2" width="5" height="1" fill="#646668"/>
<rect x="255" y="608.2" width="5" height="1" fill="#646668"/>
<rect x="255" y="614.6" width="6" height="2" fill="#858585"/>
<rect x="255" y="622.1" width="5" height="1" fill="#646668"/>
<rect x="255" y="629.1" width="5" height="1" fill="#646668"/>
<rect x="255" y="636.1" width="5" height="1" fill="#646668"/>
<rect x="255" y="643.1" width="5" height="1" fill="#646668"/>
<rect x="255" y="649.5" width="6" height="2" fill="#858585"/>
<rect x="255" y="657.0" width="5" height="1" fill="#646668"/>
<rect x="255" y="664.0" width="5" height="1" fill="#646668"/>
<rect x="255" y="671.0" width="5" height="1" fill="#646668"/>
<rect x="255" y="677.9" width="5" height="1" fill="#646668"/>
<rect x="255" y="684.4" width="6" height="2" fill="#858585"/>
<rect x="255" y="691.9" width="5" height="1" fill="#646668"/>
<rect x="255" y="698.9" width="5" height="1" fill="#646668"/>
<rect x="255" y="705.9" width="5" height="1" fill="#646668"/>
<rect x="255" y="712.8" width="5" height="1" fill="#646668"/>
<rect x="255" y="719.3" width="6" height="2" fill="#858585"/>
<rect x="255" y="726.8" width="5" height="1" fill="#646668"/>
<rect x="255" y="733.8" width="5" height="1" fill="#646668"/>
<rect x="255" y="740.8" width="5" height="1" fill="#646668"/>
<rect x="255" y="747.7" width="5" height="1" fill="#646668"/>
<rect x="255" y="754.2" width="6" height="2" fill="#858585"/>
<rect x="255" y="761.7" width="5" height="1" fill="#646668"/>
<rect x="255" y="768.7" width="5" height="1" fill="#646668"/>
<rect x="255" y="775.7" width="5" height="1" fill="#646668"/>
<rect x="255" y="782.6" width="5" height="1" fill="#646668"/>
<rect x="255" y="789.1" width="6" height="2" fill="#858585"/>
<rect x="255" y="796.6" width="5" height="1" fill="#646668"/>
<rect x="255" y="803.6" width="5" height="1" fill="#646668"/>
<rect x="255" y="810.5" width="5" height="1" fill="#646668"/>
<rect x="255" y="817.5" width="5" height="1" fill="#646668"/>
<rect x="255" y="824.0" width="6" height="2" fill="#858585"/>
<rect x="255" y="831.5" width="5" height="1" fill="#646668"/>
<rect x="255" y="838.5" width="5" height="1" fill="#646668"/>
<rect x="255" y="845.4" width="5" height="1" fill="#646668"/>
<rect x="255" y="852.4" width="5" height="1" fill="#646668"/>
<rect x="255" y="858.9" width="6" height="2" fill="#858585"/>
<rect x="255" y="866.4" width="5" height="1" fill="#646668"/>
<rect x="255" y="873.4" width="5" height="1" fill="#646668"/>
<rect x="255" y="880.3" width="5" height="1" fill="#646668"/>
<rect x="255" y="887.3" width="5" height="1" fill="#646668"/>
<rect x="255" y="893.8" width="6" height="2" fill="#858585"/>
<rect x="255" y="901.3" width="5" height="1" fill="#646668"/>
<rect x="255" y="908.3" width="5" height="1" fill="#646668"/>
<rect x="255" y="915.2" width="5" height="1" fill="#646668"/>
<rect x="255" y="922.2" width="5" height="1" fill="#646668"/>
<rect x="255" y="928.7" width="6" height="2" fill="#858585"/>
<rect x="255" y="936.2" width="5" height="1" fill="#646668"/>
<rect x="255" y="943.1" width="5" height="1" fill="#646668"/>
<rect x="255" y="950.1" width="5" height="1" fill="#646668"/>
<rect x="255" y="957.1" width="5" height="1" fill="#646668"/>
<rect x="255" y="963.6" width="6" height="2" fill="#858585"/>
<rect x="255" y="971.1" width="5" height="1" fill="#646668"/>
<rect x="255" y="978.0" width="5" height="1" fill="#646668"/>
<rect x="255" y="985.0" width="5" height="1" fill="#646668"/>
<rect x="255" y="992.0" width="5" height="1" fill="#646668"/>
<rect x="255" y="998.5" width="6" height="2" fill="#858585"/>
<text transform="translate(273.6,91.4) rotate(-90) scale(.72,1)" font-size="10.5" fill="#2e3136" text-anchor="middle">-100</text>
<text transform="translate(273.6,161.2) rotate(-90) scale(.72,1)" font-size="10.5" fill="#596068" text-anchor="middle">0</text>
<text transform="translate(273.6,231.0) rotate(-90) scale(.72,1)" font-size="10.5" fill="#596068" text-anchor="middle">100</text>
<text transform="translate(273.6,300.8) rotate(-90) scale(.72,1)" font-size="10.5" fill="#596068" text-anchor="middle">200</text>
<text transform="translate(273.6,370.6) rotate(-90) scale(.72,1)" font-size="10.5" fill="#596068" text-anchor="middle">300</text>
<text transform="translate(273.6,440.4) rotate(-90) scale(.72,1)" font-size="10.5" fill="#596068" text-anchor="middle">400</text>
<text transform="translate(273.6,510.1) rotate(-90) scale(.72,1)" font-size="10.5" fill="#596068" text-anchor="middle">500</text>
<text transform="translate(273.6,579.9) rotate(-90) scale(.72,1)" font-size="10.5" fill="#596068" text-anchor="middle">600</text>
<text transform="translate(273.6,649.7) rotate(-90) scale(.72,1)" font-size="10.5" fill="#596068" text-anchor="middle">700</text>
<text transform="translate(273.6,719.5) rotate(-90) scale(.72,1)" font-size="10.5" fill="#596068" text-anchor="middle">800</text>
<text transform="translate(273.6,789.3) rotate(-90) scale(.72,1)" font-size="10.5" fill="#596068" text-anchor="middle">900</text>
<text transform="translate(273.6,859.1) rotate(-90) scale(.72,1)" font-size="10.5" fill="#596068" text-anchor="middle">1000</text>
<text transform="translate(273.6,928.9) rotate(-90) scale(.72,1)" font-size="10.5" fill="#596068" text-anchor="middle">1100</text>
<text transform="translate(273.6,998.7) rotate(-90) scale(.72,1)" font-size="10.5" fill="#596068" text-anchor="middle">1200</text></svg>
<div class="a" style="left:279px;top:100px;width:1px;height:900px;background:#a9aaad"></div>
<div class="t" style="left:1449px;top:977.500px;font-size:11.800px;color:#55585f">当前选中: 子看板1 &gt; <span style="color:#b4b6ba">世界地图</span></div>

<!-- ============ RIGHT PANEL ============ -->
<div class="a" id="rp"></div>
<div class="a" style="left:1619px;top:77px;width:301px;height:41px;background:#2b2c31"></div>
<div class="a" style="left:1619px;top:117px;width:301px;height:1px;background:#222327"></div>
<div class="t" style="left:1649px;top:91px;font-size:13px;color:#cfd0d2">当前状态：默认状态</div>
<svg style="left:1866px;top:90px" width="14" height="14"><path d="M7 .5v13M.5 7h13" stroke="#ededed" stroke-width="1.500"/></svg>
<svg style="left:1895px;top:92px" width="6" height="10"><path d="M1 1l3.500 4L1 9" fill="none" stroke="#6f7279" stroke-width="1.100"/></svg>
<div class="a" style="left:1619px;top:118px;width:301px;height:35px;background:#34353b"></div>
<div class="t" style="left:1637px;top:130px;font-size:12px;color:#d6d7d9;word-spacing:0">样式</div>
<div class="t" style="left:1677px;top:130px;font-size:12px;color:#d6d7d9">交互</div>
<div class="t" style="left:1717px;top:130px;font-size:12px;color:#d6d7d9">数据</div>
<div class="t" style="left:1757px;top:130px;font-size:12px;color:#d6d7d9">代码</div>
<div class="t" style="left:1797px;top:130px;font-size:12px;color:#d6d7d9">更多</div>
<div class="a" style="left:1629px;top:151px;width:40px;height:2px;background:#1a8cff"></div>
<div class="t b" style="left:1629px;top:163px;font-size:14px;color:#ffffff">世界地图</div>
<div class="t b" style="left:1690px;top:166px;font-size:10.5px;color:#8f9197;letter-spacing:-.55px">v0.1.0</div>
<div class="a" style="left:1849px;top:159px;width:58px;height:20px;border-radius:2px;background:#1a8cff"></div>
<div class="t b" style="left:1854px;top:163px;font-size:12px;color:#ffffff">查看教程</div>
<!-- basic settings -->
<div class="sec" style="top:188px"></div>
<div class="a" style="left:1632px;top:205px;width:0;height:0;border-top:6px solid #d8d8d8;border-left:4.5px solid transparent;border-right:4.5px solid transparent"></div>
<div class="sect" style="top:201.5px;color:#ececec">基本设置</div>
<div class="dots3" style="top:201px"><i style="top:0"></i><i style="top:5.500px"></i><i style="top:11px"></i></div>
<div class="t" style="left:1624px;top:239px;font-size:12px;color:#e2e2e2">不透明度</div>
<div class="a" style="left:1724px;top:242px;width:110px;height:6px;border-radius:3px;background:#1a8cff"></div>
<div class="a" style="left:1828px;top:239px;width:12px;height:12px;border-radius:50%;background:#fff;border:2px solid #1a8cff"></div>
<div class="a" style="left:1845px;top:233px;width:64px;height:24px;border-radius:2px;background:#1e1f22;border:1px solid #44464d"></div>
<div class="t b" style="left:1864.5px;top:240px;font-size:10.5px;color:#e2e2e2;letter-spacing:-.7px">100</div>
<div class="t b" style="left:1895px;top:240px;font-size:10.5px;color:#a4a6ab;letter-spacing:-.5px">%</div>
<div class="t" style="left:1624px;top:273px;font-size:12px;color:#e2e2e2">地图投影方式</div>
<div class="a" style="left:1724px;top:267px;width:185px;height:24px;border-radius:2px;background:#1e1f22;border:1px solid #44464d"></div>
<div class="t" style="left:1731px;top:273px;font-size:12px;color:#e2e2e2">默认</div>
<svg style="left:1889px;top:276px" width="11" height="7"><path d="M.6.8l4.700 4.600L10 .8" fill="none" stroke="#9a9da3" stroke-width="1.100"/></svg>
<div class=""><div class="sec" style="top:297px"></div><div class="tri" style="top:312.5px"></div><div class="sect" style="top:311px;color:#ececec">底图层</div><div class="dots3" style="top:309px"><i style="top:0"></i><i style="top:5.5px"></i><i style="top:11px"></i></div></div>
<div class="dis"><div class="sec" style="top:338px"></div><div class="tri" style="top:353.5px"></div><div class="sect" style="top:352px">呼吸点层</div><div class="tg" style="top:353px"><div class="tr"></div><div class="kn"></div></div><div class="dots3" style="top:350px"><i style="top:0"></i><i style="top:5.5px"></i><i style="top:11px"></i></div></div>
<div class="dis"><div class="sec" style="top:379px"></div><div class="tri" style="top:394.5px"></div><div class="sect" style="top:393px">热力层</div><div class="tg" style="top:394px"><div class="tr"></div><div class="kn"></div></div><div class="dots3" style="top:391px"><i style="top:0"></i><i style="top:5.5px"></i><i style="top:11px"></i></div></div>
<div class="dis"><div class="sec" style="top:420px"></div><div class="tri" style="top:435.5px"></div><div class="sect" style="top:434px">柱状层</div><div class="tg" style="top:435px"><div class="tr"></div><div class="kn"></div></div><div class="dots3" style="top:432px"><i style="top:0"></i><i style="top:5.5px"></i><i style="top:11px"></i></div></div>
<div class="dis"><div class="sec" style="top:461px"></div><div class="tri" style="top:476.5px"></div><div class="sect" style="top:475px">路线层</div><div class="tg" style="top:476px"><div class="tr"></div><div class="kn"></div></div><div class="dots3" style="top:473px"><i style="top:0"></i><i style="top:5.5px"></i><i style="top:11px"></i></div></div>
<div class="dis"><div class="sec" style="top:502px"></div><div class="tri" style="top:517.5px"></div><div class="sect" style="top:516px">飞线层</div><div class="tg" style="top:517px"><div class="tr"></div><div class="kn"></div></div><div class="dots3" style="top:514px"><i style="top:0"></i><i style="top:5.5px"></i><i style="top:11px"></i></div></div>
<div class="dis"><div class="sec" style="top:543px"></div><div class="tri" style="top:558.5px"></div><div class="sect" style="top:557px">标记层</div><div class="tg" style="top:558px"><div class="tr"></div><div class="kn"></div></div><div class="dots3" style="top:555px"><i style="top:0"></i><i style="top:5.5px"></i><i style="top:11px"></i></div></div>
<div class=""><div class="sec" style="top:584px"></div><div class="tri" style="top:599.5px"></div><div class="sect" style="top:598px;color:#ececec">展示设置</div><div class="dots3" style="top:596px"><i style="top:0"></i><i style="top:5.5px"></i><i style="top:11px"></i></div></div>
<div class=""><div class="sec" style="top:625px"></div><div class="tri" style="top:640.5px"></div><div class="sect" style="top:639px;color:#ececec">大小&amp;位置</div></div>
<div class="dis"><div class="sec" style="top:666px"></div><div class="tri" style="top:681.5px"></div><div class="sect" style="top:680px">边框设置</div><div class="tg" style="top:681px"><div class="tr"></div><div class="kn"></div></div><div class="dots3" style="top:678px"><i style="top:0"></i><i style="top:5.5px"></i><i style="top:11px"></i></div></div>
<div class="dis"><div class="sec" style="top:707px"></div><div class="tri" style="top:722.5px"></div><div class="sect" style="top:721px">背景设置</div><div class="tg" style="top:722px"><div class="tr"></div><div class="kn"></div></div><div class="dots3" style="top:719px"><i style="top:0"></i><i style="top:5.5px"></i><i style="top:11px"></i></div></div>
<div class=""><div class="sec" style="top:748px"></div><div class="tri" style="top:763.5px"></div><div class="sect" style="top:762px;color:#ececec">组件封面</div><div class="dots3" style="top:760px"><i style="top:0"></i><i style="top:5.5px"></i><i style="top:11px"></i></div></div>
<!-- lock -->
<svg style="left:1894px;top:636px" width="13" height="15"><rect x=".6" y="6" width="11.800" height="8.200" rx="1" fill="none" stroke="#d4d4d4" stroke-width="1.100"/><path d="M3.300 6V3.800a3.200 3.200 0 0 1 6.400 0V6" fill="none" stroke="#d4d4d4" stroke-width="1.100"/><rect x="5.800" y="8.800" width="1.400" height="2.800" fill="#d4d4d4"/></svg>

<!-- ============ POPUP ============ -->
<div class="a" id="pop"></div>
<svg style="left:1606px;top:237px" width="8" height="16"><path d="M0 1 6.500 8 0 15Z" fill="#2d2e33" stroke="#404148" stroke-width="1"/><rect x="-1" y="1.500" width="1.600" height="13" fill="#2d2e33"/></svg>
<div class="t" style="left:1305px;top:97px;font-size:12px;color:#d4d5d7">二次开发调用代码示例:</div>
<div class="cb" style="top:128px"></div>
<div class="t" style="left:1306px;top:138px;font-size:12px;color:#d4d5d7">获取设置项:</div>
<div class="code" style="top:162px"></div><div class="hl" style="top:163px"></div>
<div class="ln" style="left:1317px;top:166px">1</div><div class="ln" style="left:1317px;top:183px">2</div><div class="ln" style="left:1317px;top:200px">3</div>
<div class="cd" style="left:1355px;top:166px"><span class="cy">this</span><span class="cc">.</span><span class="cr">element</span><span class="cc">.</span><span class="cr">getOption</span>(</div>
<div class="cd" style="left:1365px;top:183px">[<span class="cg">"opacity"</span>]</div>
<div class="cd" style="left:1360px;top:200px">);</div>
<div class="cb" style="top:270px"></div>
<div class="t" style="left:1306px;top:280px;font-size:12px;color:#d4d5d7">对设置项赋值:</div>
<div class="code" style="top:304px"></div><div class="hl" style="top:305px"></div>
<div class="ln" style="left:1317px;top:308px">1</div><div class="ln" style="left:1317px;top:325px">2</div><div class="ln" style="left:1317px;top:342px">3</div><div class="ln" style="left:1317px;top:358px">4</div>
<div class="cd" style="left:1355px;top:308px"><span class="cy">this</span><span class="cc">.</span><span class="cr">element</span><span class="cc">.</span><span class="cr">setOption</span>(</div>
<div class="cd" style="left:1365px;top:325px">[<span class="cg">"opacity"</span>],</div>
<div class="cd co" style="left:1365px;top:342px">100</div>
<div class="cd" style="left:1360px;top:358.5px">);</div>
<!-- red annotation -->
<div class="a" style="left:1271px;top:55px;width:348px;height:379px;border:2px solid #ee1c25"></div>
<svg style="left:0;top:0" width="1920" height="1040"><path d="M1229.300 697.200 1413.800 476 1415.600 480.200 1420 463 1404 470.400 1408.400 471.600 1227.700 696Z" fill="#ec1c24"/></svg>

<!-- ============ BOTTOM ============ -->
<div class="a" id="bb"></div>
<div class="a" style="left:315px;top:1000px;width:130px;height:40px;background:#232427"></div>
<div class="a" style="left:315px;top:999.700px;width:130px;height:1.300px;background:#1a8cff"></div>
<div class="a" style="left:314px;top:1000px;width:1px;height:40px;background:#222327"></div>
<div class="a" style="left:444px;top:1000px;width:1px;height:40px;background:#222327"></div>
<div class="a" style="left:475px;top:1000px;width:1px;height:40px;background:#222327"></div>
<div class="a" style="left:534px;top:1000px;width:1px;height:40px;background:#222327"></div>
<div class="t" style="left:264px;top:1015px;font-size:12px;color:#e4e4e4">前景</div>
<svg style="left:294px;top:1007px" width="14" height="14"><circle cx="6.500" cy="6.500" r="5.700" fill="none" stroke="#d8d8d8" stroke-width="1"/><path d="M6.500 3.500v6M3.500 6.500h6" stroke="#d8d8d8" stroke-width="1"/></svg>
<svg style="left:325.500px;top:1017px" width="12" height="11"><rect x=".8" y=".8" width="9.400" height="6.400" fill="none" stroke="#1a8cff" stroke-width="1.300"/><path d="M3 7.500 2 10.500M8 7.500l1 3" stroke="#1a8cff" stroke-width="1.300"/></svg>
<div class="t" style="left:342px;top:1016px;font-size:12px;color:#1a8cff;letter-spacing:-.3px">子看板1</div>
<svg style="left:453px;top:1013px" width="14" height="14"><path d="M7 .5v12M1 6.500h12" stroke="#f4f4f4" stroke-width="1.800"/></svg>
<div class="t" style="left:486.500px;top:1015px;font-size:12px;color:#e4e4e4">背景</div>
<svg style="left:514px;top:1007px" width="14" height="14"><circle cx="6.500" cy="6.500" r="5.700" fill="none" stroke="#d8d8d8" stroke-width="1"/><path d="M6.500 3.500v6M3.500 6.500h6" stroke="#d8d8d8" stroke-width="1"/></svg>
<div class="t b" style="left:1505px;top:1014px;font-size:11px;color:#c4c5c8;letter-spacing:-.3px">69.79%</div>
<svg style="left:1551px;top:1012px" width="16" height="16"><rect x=".7" y=".7" width="14" height="14" rx="1" fill="none" stroke="#d0d0d0" stroke-width="1.100"/><path d="M7.700 2.500v10.400M2.500 7.700h10.400" stroke="#d0d0d0" stroke-width="1"/><path d="M7.700 2 6 4h3.400ZM7.700 13.400 6 11.400h3.400ZM2 7.700 4 6v3.400ZM13.400 7.700 11.400 6v3.400Z" fill="#d0d0d0"/></svg>
<div class="a" style="left:1571px;top:1005px;width:1px;height:30px;background:#3a3b41"></div>
<svg style="left:1574px;top:1014px" width="19" height="12"><rect x=".7" y=".7" width="17" height="10" rx="2" fill="none" stroke="#d0d0d0" stroke-width="1.100"/><path d="M3.500 4h1.500M6.500 4h1.500M9.500 4h1.500M12.500 4h1.500M3.500 7.500h1.500M6.500 7.500h5M12.500 7.500h1.500" stroke="#d0d0d0" stroke-width="1.100"/></svg>
<div class="a" style="left:1595px;top:1005px;width:1px;height:30px;background:#3a3b41"></div>
<svg style="left:1599px;top:1012px" width="16" height="16"><rect x=".7" y=".7" width="14.600" height="14.600" rx="1" fill="#4a4b51" stroke="#b8b8b8" stroke-width="1.100"/><path d="M4 5l3.500 3L4 11M8.500 11.500h4" fill="none" stroke="#d8d8d8" stroke-width="1.100"/></svg>
<div class="a" id="sb"></div>
<div class="t b" style="left:1622px;top:1003px;font-size:11.500px;color:#eeeeee;letter-spacing:-.4px">内存:&nbsp; 183 / 3904 / 4096 MB&nbsp; 27 / 210 MB</div>
<div class="t b" style="right:4px;top:1003px;font-size:11.500px;color:#eeeeee;letter-spacing:-.4px">FPS:&nbsp; 52</div>
<div class="t b" style="left:1622px;top:1024px;font-size:11.500px;color:#eeeeee;letter-spacing:-.4px">组件数: 1 / 1</div>
<div class="t b" style="right:4px;top:1024px;font-size:11.500px;color:#eeeeee;letter-spacing:-.4px">4.2.0-beta.54</div>
<div class="a" style="left:0;top:1039px;width:1920px;height:1px;background:rgba(0,0,0,.25)"></div>

</body>
</html>
